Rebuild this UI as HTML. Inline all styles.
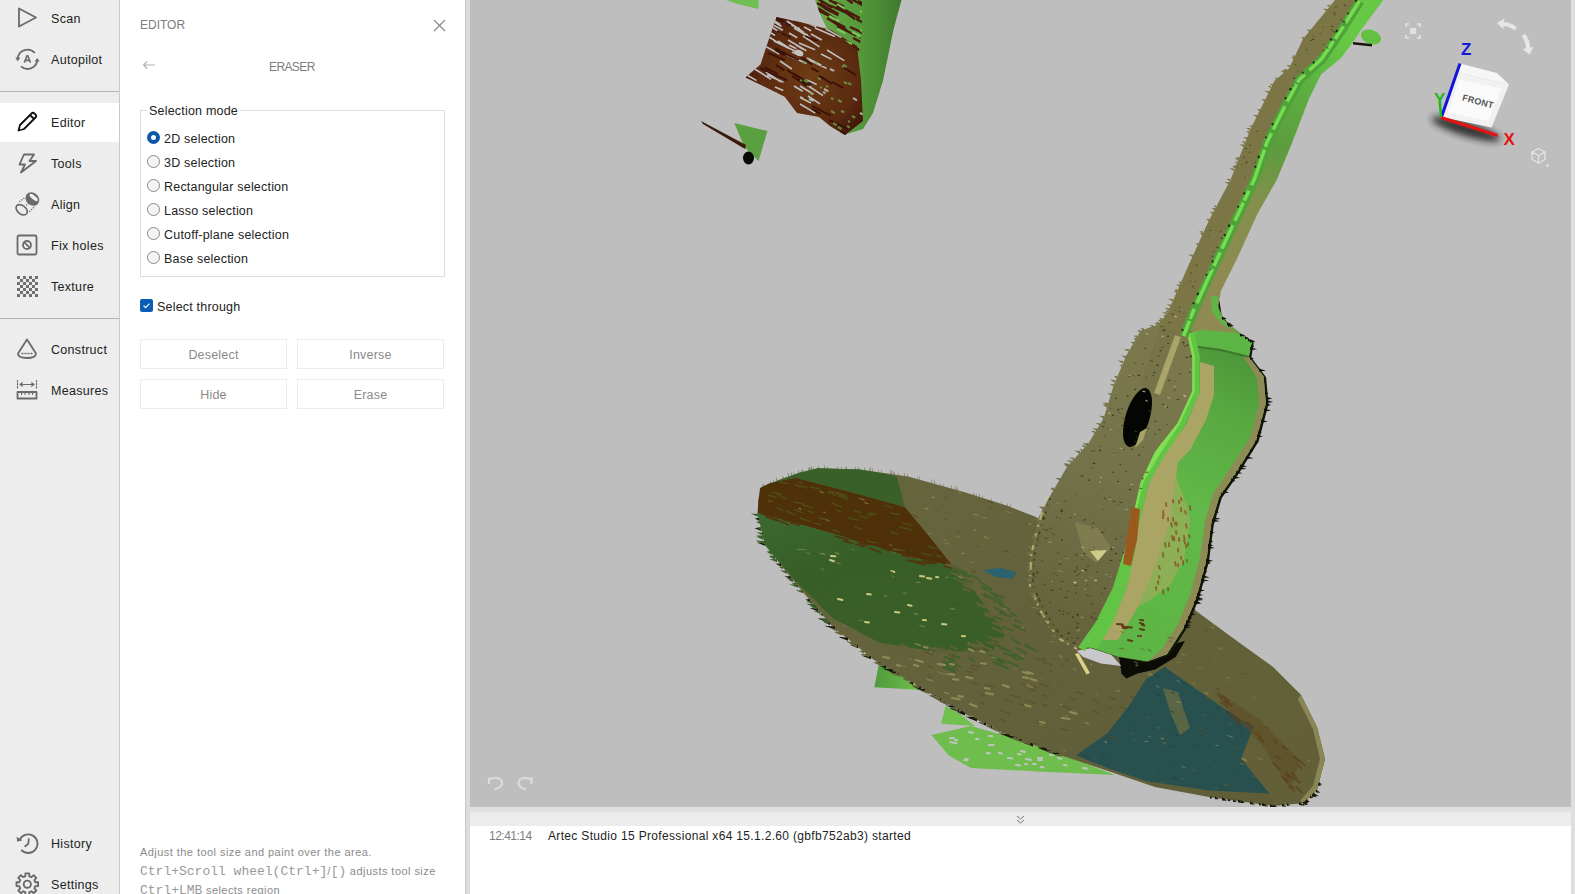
<!DOCTYPE html>
<html><head><meta charset="utf-8"><title>Artec Studio 15 Professional</title>
<style>
*{box-sizing:border-box;margin:0;padding:0}
html,body{width:1575px;height:894px;overflow:hidden;background:#fff;font-family:"Liberation Sans",sans-serif;}
#app{position:relative;width:1575px;height:894px;overflow:hidden;background:#fff}
#side{position:absolute;left:0;top:0;width:120px;height:894px;background:#ededed;border-right:1px solid #c9c9c9}
.nav{position:absolute;left:0;width:119px;height:40px}

.nav.sel{background:linear-gradient(#ededed 1px,#fff 1px)}
.nav span{position:absolute;left:51px;top:14px;font-size:12.5px;line-height:14px;color:#222;letter-spacing:.3px}
.nav svg{position:absolute;left:15px;top:8px;width:24px;height:24px;overflow:visible}
.sep{position:absolute;left:0;width:119px;height:1px;background:#b4b4b4}
#panel{position:absolute;left:120px;top:0;width:345px;height:894px;background:#fff}
#split{position:absolute;left:465px;top:0;width:5px;height:894px;background:#dcdcdc;border-left:1px solid #c8c8c8}
#view{position:absolute;left:470px;top:0;width:1101px;height:807px;background:#bebebe;overflow:hidden}
#rgt{position:absolute;left:1571px;top:0;width:4px;height:894px;background:#dedede}
#bar1{position:absolute;left:470px;top:807px;width:1101px;height:5px;background:#e0e0e0}
#bar2{position:absolute;left:470px;top:812px;width:1101px;height:14px;background:#ececec}
#log{position:absolute;left:470px;top:826px;width:1101px;height:68px;background:#fff;font-size:12px;color:#222}
.t{position:absolute;white-space:nowrap}
.g{color:#7d7d7d}
fieldset{position:absolute;left:20px;top:110px;width:305px;height:167px;border:1px solid #dedede}
.lg{position:absolute;left:27px;top:104px;background:#fff;padding:0 2px;font-size:12.5px;line-height:14px;color:#222;letter-spacing:.2px}
.rd{position:absolute;left:27px;width:13px;height:13px;border-radius:50%;border:1px solid #8a8a8a;background:#f4f4f4}
.rd.on{border:4px solid #0b57a8;background:#fff}
.rl{position:absolute;left:44px;font-size:12.5px;line-height:14px;color:#222;letter-spacing:.2px;white-space:nowrap}
.btn{position:absolute;width:147px;height:30px;border:1px solid #ececec;background:#fff;font-size:12.5px;line-height:30px;text-align:center;color:#8a8a8a;letter-spacing:.2px}
.help{position:absolute;left:20px;font-size:11px;line-height:12px;color:#8a8a8a;white-space:nowrap;letter-spacing:.45px}
.mono{font-family:"Liberation Mono",monospace;font-size:13px;letter-spacing:0;color:#999}
</style></head><body><div id="app">

<div id="side">
<div class="nav" style="top:-2px"><svg viewBox="0 0 24 24" fill="none" stroke="#6a6a6a" stroke-width="1.8" stroke-linejoin="round" stroke-linecap="round"><path d="M4 2.5L21 11.5L4 20.5Z"/></svg><span>Scan</span></div>
<div class="nav" style="top:39px"><svg viewBox="0 0 24 24" fill="none" stroke="#6a6a6a" stroke-width="1.8" stroke-linejoin="round" stroke-linecap="butt"><path d="M19.8 6A9.8 9.8 0 0 0 2.7 11.2M6 19.4A9.8 9.8 0 0 0 22.2 14"/><path d="M0.300 10.600H5.300L2.700 14.400ZM19.600 14.600H24.600L22.300 11Z" fill="#6a6a6a" stroke="none"/><path d="M9.300 15.600L12 8.800H12.800L15.500 15.600M10.300 13.400H14.500" stroke-width="1.600" stroke-linejoin="miter"/></svg><span>Autopilot</span></div>
<div class="nav sel" style="top:102px"><svg viewBox="0 0 24 24" fill="none" stroke="#111" stroke-width="1.8" stroke-linejoin="round" stroke-linecap="round"><path d="M3.5 20.5L5 15L16.5 3.5Q18 2 19.6 3.6L20.4 4.4Q22 6 20.5 7.5L9 19Z M15 5L19 9"/></svg><span>Editor</span></div>
<div class="nav" style="top:143px"><svg viewBox="0 0 24 24" fill="none" stroke="#6a6a6a" stroke-width="1.8" stroke-linejoin="round" stroke-linecap="round"><path d="M9 3.5H19L14.5 10H21L6 21.5L10 13.5H4.5Z"/></svg><span>Tools</span></div>
<div class="nav" style="top:184px"><svg viewBox="0 0 24 24" fill="none" stroke="#6a6a6a" stroke-width="1.700"><ellipse cx="6.700" cy="17.800" rx="6.400" ry="4.200" transform="rotate(39 6.700 17.800)"/><ellipse cx="17.400" cy="7" rx="6.500" ry="5.400" transform="rotate(39 17.400 7)" fill="#6a6a6a"/><ellipse cx="18.700" cy="5.500" rx="5" ry="2" transform="rotate(39 18.700 5.500)" fill="#efefef" stroke="none"/><path d="M4.300 9.700L10.300 5.300M14.300 19.800L20 14.100M11.100 13.300L15.100 10.100" stroke-width="1.300" stroke-dasharray="1.300 1.200"/></svg><span>Align</span></div>
<div class="nav" style="top:225px"><svg viewBox="0 0 24 24" fill="none" stroke="#6a6a6a" stroke-width="1.8" stroke-linejoin="round" stroke-linecap="round"><rect x="2.5" y="2.5" width="19" height="19" rx="1.5"/><circle cx="12" cy="12" r="4"/><path d="M9.3 9.3L14.7 14.7"/></svg><span>Fix holes</span></div>
<div class="nav" style="top:266px"><svg viewBox="0 0 24 24" fill="#707070" stroke="none"><rect x="2" y="2" width="3" height="3"/><rect x="2" y="8" width="3" height="3"/><rect x="2" y="14" width="3" height="3"/><rect x="2" y="20" width="3" height="3"/><rect x="5" y="5" width="3" height="3"/><rect x="5" y="11" width="3" height="3"/><rect x="5" y="17" width="3" height="3"/><rect x="8" y="2" width="3" height="3"/><rect x="8" y="8" width="3" height="3"/><rect x="8" y="14" width="3" height="3"/><rect x="8" y="20" width="3" height="3"/><rect x="11" y="5" width="3" height="3"/><rect x="11" y="11" width="3" height="3"/><rect x="11" y="17" width="3" height="3"/><rect x="14" y="2" width="3" height="3"/><rect x="14" y="8" width="3" height="3"/><rect x="14" y="14" width="3" height="3"/><rect x="14" y="20" width="3" height="3"/><rect x="17" y="5" width="3" height="3"/><rect x="17" y="11" width="3" height="3"/><rect x="17" y="17" width="3" height="3"/><rect x="20" y="2" width="3" height="3"/><rect x="20" y="8" width="3" height="3"/><rect x="20" y="14" width="3" height="3"/><rect x="20" y="20" width="3" height="3"/></svg><span>Texture</span></div>
<div class="nav" style="top:329px"><svg viewBox="0 0 24 24" fill="none" stroke="#6a6a6a" stroke-width="1.8" stroke-linejoin="round" stroke-linecap="round"><path d="M12 2.5L3 16.5Q3 21 12 21Q21 21 21 16.5Z"/><path d="M7 16.5H17" stroke-dasharray="1 2" stroke-width="1.3"/></svg><span>Construct</span></div>
<div class="nav" style="top:370px"><svg viewBox="0 0 24 24" fill="none" stroke="#6a6a6a" stroke-width="1.8" stroke-linejoin="round" stroke-linecap="round"><rect x="2.5" y="14" width="19" height="6.5"/><path d="M6.5 14V16.5M10 14V16.5M14 14V16.5M17.5 14V16.5" stroke-width="1.2"/><path d="M5 6.5H19M5 6.5L7.5 4.8M5 6.5L7.5 8.2M19 6.5L16.5 4.8M19 6.5L16.5 8.2" stroke-width="1.2"/><path d="M2.5 2.5V10.5M21.5 2.5V10.5" stroke-dasharray="1.5 1.5" stroke-width="1.2"/></svg><span>Measures</span></div>
<div class="nav" style="top:823px"><svg viewBox="0 0 24 24" fill="none" stroke="#6a6a6a" stroke-width="1.800" stroke-linecap="butt"><path d="M4.500 9.400A9.300 9.300 0 1 1 6.200 18.800"/><path d="M1.600 5.800L2.200 10.700L7.400 9.200Z" fill="#6a6a6a" stroke="none"/><path d="M13.800 7.400L13.300 12.800L9.600 15.800" stroke-linejoin="round"/></svg><span>History</span></div>
<div class="nav" style="top:864px"><svg viewBox="0 0 24 24" fill="none" stroke="#6a6a6a" stroke-width="1.900" stroke-linejoin="round"><path d="M10.4 1.4L14.2 1.4L14.3 4.3L16.5 5.1L18.7 3.2L21.3 5.8L19.4 8.0L20.2 10.2L23.1 10.3L23.1 14.1L20.2 14.2L19.4 16.4L21.3 18.6L18.7 21.2L16.5 19.3L14.3 20.1L14.2 23.0L10.4 23.0L10.3 20.1L8.1 19.3L5.9 21.2L3.3 18.6L5.2 16.4L4.4 14.2L1.5 14.1L1.5 10.3L4.4 10.2L5.2 8.0L3.3 5.8L5.9 3.2L8.1 5.1L10.3 4.3Z"/><circle cx="12.3" cy="12.2" r="3.600"/></svg><span>Settings</span></div>
<div class="sep" style="top:91px"></div><div class="sep" style="top:318px"></div>

</div>

<div id="panel">
<div class="t g" style="left:20px;top:18px;font-size:12px;line-height:14px;letter-spacing:0px">EDITOR</div>
<svg style="position:absolute;left:313px;top:19px" width="13" height="13" viewBox="0 0 13 13"><path d="M1 1L12 12M12 1L1 12" stroke="#8a8a8a" stroke-width="1.2" fill="none"/></svg>
<svg style="position:absolute;left:22px;top:60px" width="14" height="10" viewBox="0 0 14 10"><path d="M13 5H1.5M5 1.5L1.5 5L5 8.5" stroke="#b0b0b0" stroke-width="1.1" fill="none"/></svg>
<div class="t g" style="left:149px;top:60px;font-size:12px;line-height:14px;letter-spacing:-.6px">ERASER</div>
<fieldset></fieldset>
<div class="lg">Selection mode</div>
<div class="rd on" style="top:131px"></div><div class="rl" style="top:132px">2D selection</div>
<div class="rd" style="top:155px"></div><div class="rl" style="top:156px">3D selection</div>
<div class="rd" style="top:179px"></div><div class="rl" style="top:180px">Rectangular selection</div>
<div class="rd" style="top:203px"></div><div class="rl" style="top:204px">Lasso selection</div>
<div class="rd" style="top:227px"></div><div class="rl" style="top:228px">Cutoff-plane selection</div>
<div class="rd" style="top:251px"></div><div class="rl" style="top:252px">Base selection</div>
<svg style="position:absolute;left:20px;top:299px" width="13" height="13" viewBox="0 0 13 13"><rect width="13" height="13" rx="2" fill="#0b5cb5"/><path d="M3.6 6.6L5.6 8.6L9.4 4.6" stroke="#fff" stroke-width="1.1" fill="none"/></svg>
<div class="rl" style="left:37px;top:300px">Select through</div>
<div class="btn" style="left:20px;top:339px">Deselect</div>
<div class="btn" style="left:177px;top:339px">Inverse</div>
<div class="btn" style="left:20px;top:379px">Hide</div>
<div class="btn" style="left:177px;top:379px">Erase</div>
<div class="help" style="top:846px">Adjust the tool size and paint over the area.</div>
<div class="help" style="top:865px"><span class="mono">Ctrl+Scroll wheel(Ctrl+]</span>/<span class="mono">[)</span> adjusts tool size</div>
<div class="help" style="top:884px"><span class="mono">Ctrl+LMB</span> selects region</div>
</div>

<div id="split"></div>
<div id="view">
<!--S0--><svg id="scene" style="position:absolute;left:0;top:0" width="1101" height="807" viewBox="470 0 1101 807">
<defs>
<linearGradient id="gside" gradientUnits="userSpaceOnUse" x1="1120" y1="640" x2="1270" y2="340"><stop offset="0" stop-color="#5cb544"/><stop offset="0.45" stop-color="#62b848"/><stop offset="0.75" stop-color="#58a840"/><stop offset="1" stop-color="#478f36"/></linearGradient>
<linearGradient id="gdisc" x1="0" y1="0" x2="1" y2="1"><stop offset="0" stop-color="#67663f"/><stop offset="1" stop-color="#5e5d38"/></linearGradient>
<linearGradient id="gdg" x1="0" y1="0" x2="0.6" y2="1"><stop offset="0" stop-color="#3a6a30"/><stop offset="0.4" stop-color="#385e28"/><stop offset="1" stop-color="#3a5e27"/></linearGradient>
<linearGradient id="gfrag" x1="0" y1="0" x2="1" y2="0"><stop offset="0" stop-color="#4f9a3c"/><stop offset="1" stop-color="#72c04e"/></linearGradient>
<linearGradient id="gtl" x1="0" y1="0" x2="1" y2="0"><stop offset="0" stop-color="#6aa94a"/><stop offset="0.5" stop-color="#559a3b"/><stop offset="1" stop-color="#3f7a2d"/></linearGradient>
</defs>
<polygon points="815.0,0.0 901.5,0.0 893.4,30.0 883.0,80.5 873.0,113.0 863.0,129.0 847.0,134.0 855.0,110.0 857.0,50.0 845.0,40.0 828.0,31.0 820.0,14.0" fill="url(#gtl)" />
<clipPath id="cbr"><polygon points="776.6,17.1 800.0,22.0 831.0,30.0 857.0,46.0 861.0,80.5 863.0,121.0 845.0,135.0 830.0,126.0 819.0,117.0 797.0,113.0 784.7,96.7 745.4,77.5 760.5,64.4 768.5,40.3"/></clipPath>
<clipPath id="ctg"><polygon points="815.0,0.0 862.0,0.0 862.0,30.0 859.0,52.0 845.0,40.0 828.0,31.0 820.0,14.0"/></clipPath>
<radialGradient id="gbr" cx="0.55" cy="0.5" r="0.6"><stop offset="0" stop-color="#6e3c14"/><stop offset="0.7" stop-color="#5a2a10"/><stop offset="1" stop-color="#40140a"/></radialGradient>
<polygon points="776.6,17.1 800.0,22.0 831.0,30.0 857.0,46.0 861.0,80.5 863.0,121.0 845.0,135.0 830.0,126.0 819.0,117.0 797.0,113.0 784.7,96.7 745.4,77.5 760.5,64.4 768.5,40.3" fill="url(#gbr)" />
<path d="M784 22l15.8 6.7M800 31l7.8 4.1M763 35l8.3 3.5M792 52l8.8 4.1M807 58l14.4 7.2M833 17l18.1 8.6M771 20l10.5 6.5M774 41l15.2 7.6M801 18l8.0 3.7M811 34l10.8 6.0M794 28l16.5 9.7M778 41l12.9 8.2M815 28l19.9 8.6M791 49l9.0 4.7M763 45l16.4 9.0M826 29l15.5 8.6M803 36l16.5 10.9M796 45l7.6 4.5M809 60l17.6 8.4M789 45l7.4 3.8M773 20l7.5 4.6M770 26l11.4 7.2M766 35l13.2 8.5M821 54l10.6 5.4M787 55l19.6 8.6M773 25l10.0 5.3M804 27l7.2 3.7M788 40l18.4 10.8M799 43l16.1 6.7M827 50l17.2 10.6M789 33l8.2 4.7M765 18l10.0 4.4M786 17l7.3 3.2M768 31l7.0 4.5M806 22l10.3 5.1M787 21l16.5 11.1" stroke="#bebebe" stroke-width="1.6" fill="none" clip-path="url(#cbr)" opacity="1"/>
<path d="M775 87l8.3 3.6M767 75l16.4 7.3M747 112l13.1 5.8M780 61l11.9 8.0M801 98l10.0 5.0M756 102l12.3 7.5M766 72l14.7 9.9M800 104l15.3 9.1M760 88l11.3 4.7M747 75l9.6 5.6M807 85l16.0 10.7M807 80l9.7 4.5M758 71l13.0 8.4M800 86l13.5 8.3M751 96l16.1 9.9M794 86l8.7 5.3M767 104l17.6 8.8M771 112l15.2 6.8M753 68l16.0 9.9M755 105l17.1 9.8M768 90l8.9 3.6M808 96l12.0 7.8" stroke="#bebebe" stroke-width="1.6" fill="none" clip-path="url(#cbr)" opacity="1"/>
<path d="M797 120l17.8 8.1M775 50l9.9 5.5M776 65l8.3 5.3M787 70l13.6 8.8M795 125l13.2 7.1M808 17l12.9 5.8M745 111l9.2 4.8M832 82l11.1 5.9M812 109l8.3 4.6M775 48l16.6 8.9M812 106l18.5 9.5M819 76l13.1 7.7M799 79l12.3 8.1M829 120l19.2 9.0M812 128l18.1 7.9M760 68l8.2 3.8M754 95l16.0 10.3M764 101l15.8 6.9M851 131l9.2 6.1M793 73l18.5 11.6M764 67l13.7 6.7M768 53l16.8 6.9M811 68l7.4 3.6M820 76l7.4 5.0M840 132l8.6 4.0M750 108l10.8 4.7M796 124l17.6 8.3M763 125l13.8 8.1M756 22l15.7 8.0M754 128l14.4 8.9M755 118l7.5 4.8M799 56l13.2 8.6M777 31l14.0 6.5M758 34l7.9 3.6M782 52l16.8 8.0M805 36l11.9 4.9M775 17l16.0 8.7M768 72l19.4 8.3M843 67l12.7 7.9M792 76l14.7 9.8" stroke="#3a1008" stroke-width="1.8" fill="none" clip-path="url(#cbr)" opacity="1"/>
<path d="M822 122l3.6 2.0M826 86l2.0 0.9M805 116l2.5 1.1M805 123l4.0 2.3M818 78l2.6 1.3M810 93l2.3 1.5M863 101l2.3 1.5M820 87l1.8 0.9M831 98l2.3 1.2M800 80l2.0 1.0M803 62l2.6 1.2M838 100l3.7 2.1M847 126l2.8 1.4M864 71l3.6 2.1M803 123l4.1 2.3M848 121l2.1 1.1M833 123l3.7 2.3M838 127l3.5 2.0M815 62l2.2 1.1M807 123l3.2 1.8M841 111l3.2 1.3M852 116l3.1 1.7M843 65l3.8 1.8M805 80l3.8 1.7M848 133l3.1 1.6M831 111l3.7 2.1M842 66l2.2 1.0M848 83l3.4 1.4M804 80l3.5 2.0M844 82l3.1 1.6" stroke="#6aa04a" stroke-width="2.2" fill="none" clip-path="url(#cbr)" opacity="0.8"/>
<path d="M830 69l4.3 1.9M864 130l1.8 0.9M853 133l3.0 1.4M814 131l2.3 1.3M809 99l4.5 1.9M853 98l4.0 2.4M815 127l3.2 1.3M800 97l3.0 1.4M809 86l2.5 1.6M800 116l4.1 1.8M860 113l4.2 2.0M824 89l4.4 2.4M823 92l2.6 1.1M807 123l2.4 1.6" stroke="#bebebe" stroke-width="2" fill="none" clip-path="url(#cbr)" opacity="0.9"/>
<ellipse cx="799" cy="53" rx="4.500" ry="3" fill="#c4c4c4" transform="rotate(25 799 53)"/>
<path d="M824 8l14.5 7.2M831 43l18.4 12.3M844 41l19.8 11.7M848 -3l17.2 9.7M850 27l11.4 5.2M858 1l13.7 7.3M827 32l21.0 10.8M845 10l14.8 8.1M820 3l9.3 6.5M837 6l18.2 13.2M834 2l10.0 4.7M829 -0l10.5 5.4M840 39l17.5 9.7M833 21l12.4 6.6M815 9l21.2 10.1M837 26l19.5 9.8M826 7l12.5 7.1M860 37l20.0 9.0M814 30l19.4 11.1M841 -5l11.7 8.2M853 38l21.0 10.7M817 3l13.8 8.7M859 31l15.4 10.0M835 23l7.2 4.8M824 41l16.2 8.5M818 8l15.4 9.7M818 -1l14.1 8.4M831 6l16.1 7.2M827 18l19.9 12.3M856 19l10.5 5.3" stroke="#4a1a0c" stroke-width="2.4" fill="none" clip-path="url(#ctg)" opacity="1"/>
<path d="M860 30l7.7 3.5M837 29l8.3 4.3M845 41l7.1 3.2M829 16l10.3 5.1M852 32l9.0 4.5M860 11l11.2 5.7M823 33l6.8 4.8M837 4l6.8 3.8" stroke="#7cc95a" stroke-width="2" fill="none" clip-path="url(#ctg)" opacity="1"/>
<polygon points="726.0,0.0 758.5,0.0 758.5,9.0 738.0,4.0" fill="#6fbf52" />
<polygon points="734.3,122.9 767.5,131.0 758.5,161.0 744.4,147.0" fill="#5aa040" />
<polygon points="701.0,121.0 703.0,124.0 745.0,149.0 746.0,145.0" fill="#3a1a08" />
<ellipse cx="748.5" cy="158" rx="5.5" ry="6.5" fill="#0a0a05"/>
<polygon points="879.0,663.5 874.3,687.3 922.0,690.0 896.0,671.4" fill="url(#gfrag)" />
<polygon points="945.7,706.0 941.0,723.8 975.0,726.0 960.0,714.0" fill="#72c04e" />
<polygon points="931.4,735.0 971.0,726.0 1012.4,737.7 1063.0,755.0 1115.0,775.0 1037.8,771.4 971.0,768.0 948.9,755.6" fill="#6fbd4c" />
<polygon points="758.0,500.0 761.0,488.0 779.0,480.0 800.0,472.5 818.0,468.2 860.0,469.6 908.0,476.6 964.0,492.0 1008.0,506.0 1036.0,517.0 1196.0,611.0 1215.0,625.0 1241.0,644.0 1273.0,667.0 1301.0,695.0 1317.0,727.0 1325.0,759.0 1317.0,790.0 1304.0,803.0 1273.0,806.0 1209.0,797.0 1155.0,787.0 1108.0,771.0 1063.0,756.0 1012.0,737.0 965.0,714.0 924.0,690.0 874.0,660.0 832.0,626.0 796.0,584.0 765.0,545.0 758.0,514.0" fill="url(#gdisc)" />
<polygon points="768.0,485.0 779.0,480.0 800.0,472.5 818.0,468.2 860.0,469.6 896.6,476.0 905.0,507.3 850.0,492.0 796.0,478.0" fill="#3a6029" />
<polygon points="760.0,488.0 770.0,483.0 796.0,478.0 850.0,492.0 905.0,507.3 928.0,535.0 952.6,566.0 907.8,556.3 824.0,531.0 757.5,513.0" fill="#4e3009" />
<polygon points="757.5,513.0 824.0,531.0 907.8,556.3 952.6,566.0 977.8,595.5 1005.7,634.6 991.7,651.4 935.8,651.4 879.9,643.0 832.3,617.8 796.0,581.5 765.0,545.0" fill="url(#gdg)" />
<polygon points="983.0,570.0 1000.0,568.0 1017.0,572.0 1012.0,579.0 995.0,577.0" fill="#2b6470" />
<polygon points="1164.8,666.7 1177.5,676.0 1218.7,704.8 1253.6,727.0 1241.0,758.7 1269.5,793.6 1209.0,790.5 1145.7,781.0 1107.6,768.0 1075.9,755.6 1107.6,733.0 1129.8,704.8 1145.7,679.4" fill="#27504f" />
<polygon points="1196.0,611.0 1215.0,625.0 1241.0,644.0 1273.0,667.0 1301.0,695.0 1317.0,727.0 1325.0,759.0 1317.0,790.0 1304.0,803.0 1273.0,806.0 1269.5,793.6 1241.0,758.7 1253.6,727.0 1218.7,704.8 1177.5,676.0 1164.8,666.7 1185.0,641.0" fill="#66623a" opacity="0.55"/>
<polygon points="1215.0,690.0 1260.0,720.0 1300.0,760.0 1290.0,790.0 1262.0,745.0 1230.0,712.0" fill="#5e4a24" opacity="0.55"/>
<polygon points="1301.0,695.0 1317.0,727.0 1325.0,759.0 1317.0,790.0 1304.0,803.0 1300.0,801.0 1313.0,786.0 1320.0,759.0 1313.0,729.0 1298.0,699.0" fill="#8a8755" />
<polygon points="1119.0,657.0 1145.4,662.0 1167.0,655.0 1177.0,643.0 1185.0,641.0 1175.6,656.9 1155.3,669.6 1137.5,673.4 1126.3,678.5 1121.5,673.7" fill="#0c0c06" />
<polygon points="1076.8,650.8 1090.8,648.3 1111.0,654.6 1121.3,666.0 1101.0,663.5 1083.0,657.0" fill="#c8c8cc" />
<polygon points="1075.0,654.0 1078.5,653.0 1090.0,673.0 1086.5,674.5" fill="#d9d38a" />
<polygon points="1204.5,301.0 1219.4,301.0 1221.8,315.8 1234.1,330.5 1253.8,342.8 1251.3,357.6 1266.1,377.3 1268.5,404.3 1258.7,441.3 1239.0,473.2 1221.8,497.9 1213.8,524.8 1208.9,561.7 1199.0,598.6 1186.7,628.2 1169.5,655.2 1149.8,662.6 1120.3,657.7 1088.3,647.0 1080.9,647.9 1098.2,623.2 1115.4,588.8 1127.7,549.4 1134.5,521.0 1143.1,483.0 1157.5,452.5 1180.0,424.0 1194.7,392.0 1194.7,357.6 1189.8,335.4" fill="#15150a" />
<polygon points="1202.0,300.0 1216.9,300.0 1219.3,314.8 1231.6,329.5 1251.3,341.8 1248.8,356.6 1263.6,376.3 1266.0,403.3 1256.2,440.3 1236.5,472.2 1219.3,496.9 1211.3,523.8 1206.4,560.7 1196.5,597.6 1184.2,627.2 1167.0,654.2 1147.3,661.6 1117.8,656.7 1085.8,646.0 1078.4,646.9 1095.7,622.2 1112.9,587.8 1125.2,548.4 1132.0,520.0 1140.6,482.0 1155.0,451.5 1177.5,423.0 1192.2,391.0 1192.2,356.6 1187.3,334.4" fill="url(#gside)" />
<polygon points="1251.3,341.8 1248.8,356.6 1263.6,376.3 1266.0,403.3 1256.2,440.3 1236.5,472.2 1219.3,496.9 1211.3,523.8 1206.4,560.7 1196.5,597.6 1184.2,627.2 1167.0,654.2 1147.3,661.6 1162.0,649.0 1178.0,624.0 1190.0,595.0 1200.0,558.0 1205.0,522.0 1213.0,494.0 1230.0,469.0 1250.0,438.0 1259.0,403.0 1257.0,378.0 1244.0,358.0" fill="#8d8a55" />
<polygon points="1202.0,318.0 1219.3,314.8 1231.6,329.5 1252.4,342.5 1248.9,356.8 1220.0,349.7 1191.6,346.0 1187.3,334.4" fill="#5cb545" />
<polyline points="1191.600,346 1220,349.700 1248.900,356.800" fill="none" stroke="#2f5a22" stroke-width="2" opacity="0.600"/>
<polygon points="1200.0,362.0 1200.0,391.0 1186.0,425.0 1163.0,455.0 1149.0,484.0 1140.0,520.0 1133.0,550.0 1121.0,590.0 1104.0,626.0 1100.0,640.0 1118.0,640.0 1138.0,607.0 1153.0,573.0 1170.0,524.0 1176.0,478.0 1178.0,462.0 1190.0,450.0 1206.0,420.0 1214.0,395.0 1214.0,366.0" fill="#aaa465" />
<polygon points="1176.0,478.0 1185.0,500.0 1190.0,520.0 1184.0,560.0 1170.0,585.0 1150.0,600.0 1138.0,607.0 1153.0,573.0 1170.0,524.0" fill="#9cae5c" opacity="0.75"/>
<polyline points="1202.0,300.0 1187.3,334.4 1192.2,356.6 1192.2,391.0 1177.5,423.0 1157.8,452.6 1140.6,482.0 1132.0,520.0 1125.2,548.4 1112.9,587.8 1095.7,622.2 1078.4,646.9" fill="none" stroke="#62c444" stroke-width="15" stroke-linejoin="round"/>
<polyline points="1202.0,300.0 1187.3,334.4 1192.2,356.6 1192.2,391.0 1177.5,423.0 1157.8,452.6 1140.6,482.0 1132.0,520.0 1125.2,548.4 1112.9,587.8 1095.7,622.2 1078.4,646.9" fill="none" stroke="#7ee052" stroke-width="5"/>
<polygon points="1127.0,545.0 1136.0,548.0 1126.0,590.0 1112.0,624.0 1098.0,648.0 1078.4,646.9 1095.7,622.2 1112.9,587.8" fill="#62c444" />
<linearGradient id="gfront" gradientUnits="userSpaceOnUse" x1="1170" y1="330" x2="1060" y2="630"><stop offset="0" stop-color="#7c7a4c"/><stop offset="0.5" stop-color="#74724a"/><stop offset="1" stop-color="#64633b"/></linearGradient>
<polygon points="1170.0,310.0 1158.0,324.6 1140.6,330.8 1125.8,356.6 1113.5,386.0 1103.7,418.0 1088.9,442.7 1066.8,467.3 1049.5,496.9 1039.0,516.4 1029.2,555.8 1031.7,587.8 1041.5,617.3 1058.7,639.5 1078.4,646.9 1095.7,622.2 1112.9,587.8 1125.2,548.4 1132.0,520.0 1140.6,482.0 1155.0,451.5 1177.5,423.0 1192.2,391.0 1192.2,356.6 1187.3,334.4 1202.0,300.0" fill="url(#gfront)" />
<polygon points="1132.0,507.0 1140.0,509.0 1137.0,540.0 1131.0,566.0 1123.0,564.0 1127.0,535.0" fill="#9a5a1e" />
<polygon points="1075.0,522.0 1098.0,528.0 1111.0,548.0 1096.0,563.0 1083.0,552.0" fill="#8a8758" opacity="0.6"/>
<polygon points="1090.0,551.0 1107.0,550.0 1098.0,561.0" fill="#d0cc86" />
<polygon points="1160.0,325.0 1181.0,335.0 1158.0,398.0 1140.0,388.0" fill="#77744a" />
<polygon points="1175.0,335.0 1181.0,337.0 1160.0,395.0 1154.0,393.0" fill="#b5b070" opacity="0.8"/>
<polyline points="1047,496 1037,530 1031,556 1030,586 1040,610 1058,638 1077,649" fill="none" stroke="#d0ca84" stroke-width="2.200" stroke-dasharray="5 4 2 6 8 5 2 7 3 9" opacity="0.700"/>
<polyline points="1050,498 1040,531 1034,557 1033,585 1043,608 1060,635 1078,645" fill="none" stroke="#2e2d14" stroke-width="1.600" stroke-dasharray="2 5 1 6 3 4" opacity="0.700"/>
<ellipse cx="1137.5" cy="417.5" rx="12" ry="30.5" transform="rotate(17 1137.5 417.5)" fill="#050503"/>
<polygon points="1140.0,432.0 1147.0,428.0 1143.0,440.0 1135.0,448.0" fill="#a8a468" />
<polygon points="1335.0,0.0 1303.0,39.0 1289.0,68.5 1274.7,80.6 1250.5,129.0 1230.4,180.0 1208.9,220.4 1188.8,264.7 1166.6,315.0 1160.6,325.0 1181.0,335.0 1181.0,335.0 1190.0,312.0 1210.0,268.0 1230.0,225.0 1252.0,178.0 1264.6,141.0 1284.7,100.7 1296.8,78.5 1319.0,58.0 1338.0,30.0 1357.0,0.0" fill="#7c7646" />
<linearGradient id="gneck" gradientUnits="userSpaceOnUse" x1="1340" y1="40" x2="1225" y2="290"><stop offset="0" stop-color="#66c844"/><stop offset="0.2" stop-color="#5db040"/><stop offset="0.45" stop-color="#5c9c3e"/><stop offset="0.65" stop-color="#82904c"/><stop offset="1" stop-color="#8f8a52"/></linearGradient>
<polygon points="1357.0,0.0 1338.0,30.0 1319.0,58.0 1296.8,78.5 1284.7,100.7 1264.6,141.0 1252.0,178.0 1230.0,225.0 1210.0,268.0 1190.0,312.0 1181.0,335.0 1202.0,330.0 1240.0,333.0 1225.0,321.0 1218.0,307.0 1221.0,290.8 1237.1,258.6 1257.2,214.3 1276.7,180.0 1292.8,141.0 1309.0,98.7 1321.0,74.5 1341.0,58.0 1353.0,42.0 1361.0,30.0 1383.4,0.0" fill="url(#gneck)" />
<polygon points="1218.0,307.0 1225.0,321.0 1240.0,333.0 1251.0,341.0 1231.0,329.0 1219.0,314.0" fill="#5fa541" />
<polyline points="1357.0,0.0 1338.0,30.0 1319.0,58.0 1296.8,78.5 1284.7,100.7 1264.6,141.0 1252.0,178.0 1230.0,225.0 1210.0,268.0 1190.0,312.0 1181.0,335.0" fill="none" stroke="#4fa23a" stroke-width="9" transform="translate(3,1.2)"/>
<polyline points="1357.0,0.0 1338.0,30.0 1319.0,58.0 1296.8,78.5 1284.7,100.7 1264.6,141.0 1252.0,178.0 1230.0,225.0 1210.0,268.0 1190.0,312.0 1181.0,335.0" fill="none" stroke="#78dc52" stroke-width="3.5" stroke-dasharray="26 4 15 3 38 6 11 2 20 5" transform="translate(2.5,1)"/>
<polyline points="1357.0,0.0 1338.0,30.0 1319.0,58.0 1296.8,78.5 1284.7,100.7 1264.6,141.0 1252.0,178.0 1230.0,225.0 1210.0,268.0 1190.0,312.0 1181.0,335.0" fill="none" stroke="#1c2a10" stroke-width="2" stroke-dasharray="2 13 1.5 19 2.5 8 2 27" transform="translate(-0.5,0)"/>
<polygon points="1211.0,296.0 1217.5,296.0 1219.3,314.8 1231.6,329.5 1222.0,324.0 1212.0,312.0" fill="#5cb545" />
<ellipse cx="1371" cy="37" rx="10.5" ry="7" transform="rotate(20 1371 37)" fill="#63c043"/>
<polygon points="1353.0,42.0 1372.0,44.0 1372.0,46.5 1353.0,44.5" fill="#15150a" />
<path d="M968 655l6.9 3.0M999 648l11.2 7.3M904 654l12.8 4.1M989 603l5.9 2.7M929 652l7.3 3.1M979 650l8.7 3.4M1001 623l14.7 4.6M989 637l11.2 4.6M979 645l12.0 4.1M900 648l10.9 4.5M991 651l5.9 2.4M966 580l5.7 2.3M970 579l8.6 3.2M985 615l6.3 2.1M921 655l8.2 4.0M934 648l10.0 3.6M965 651l6.1 3.1M949 653l6.4 3.0M999 622l13.4 4.8M976 650l5.8 2.8M947 564l11.7 3.9M948 565l10.2 4.3M977 641l6.7 4.3M945 656l14.3 5.1M984 653l6.1 2.6M946 652l7.5 2.9M970 650l6.7 3.8M995 616l10.1 6.1M948 650l6.9 2.6M958 580l11.1 5.1M995 638l9.3 3.6M1004 633l7.2 4.4M886 649l12.2 6.6M881 644l12.2 5.6M978 605l7.8 2.6M972 645l12.2 4.8M984 612l7.7 4.0M978 654l12.5 5.1M912 651l10.9 5.8M972 646l9.1 5.0M890 651l7.1 2.2M988 649l5.7 3.4M992 641l10.7 6.2M963 589l6.6 2.2M992 622l5.8 2.5M914 654l8.3 3.1M930 648l7.6 3.4M901 644l11.1 6.1M973 644l7.1 2.5M1009 633l5.9 3.8M977 603l7.1 3.6M975 648l12.1 6.5M993 628l11.3 5.1M963 585l9.3 4.2M969 653l6.9 3.6M983 599l9.2 5.9M989 612l8.6 5.4M988 642l9.9 4.0M952 573l13.2 5.5M1003 645l5.7 3.3M1000 638l6.4 3.7M967 585l6.6 2.3M999 639l6.6 4.0M968 649l12.0 7.0M938 648l10.8 4.2M945 566l10.1 3.5M951 646l5.2 3.1M968 644l8.9 3.9M970 653l7.8 5.0M925 646l8.8 4.0" stroke="#62613b" stroke-width="2" fill="none" opacity="0.9" stroke-linecap="round"/>
<path d="M985 594l8.1 5.1M999 647l7.4 3.0M999 646l11.8 5.9M1003 627l10.4 3.9M1000 613l11.2 3.8M956 570l10.2 6.3M999 604l10.8 6.1M991 592l7.1 3.1M998 661l4.9 2.4M1013 625l12.1 5.4M993 662l12.6 5.8M954 568l4.5 2.4M951 665l5.0 3.0M1004 653l11.0 3.6M981 661l6.2 3.9M997 609l7.4 4.2M1025 646l9.4 3.7M945 665l9.8 5.7M994 597l7.6 4.6M994 657l11.4 4.5M1013 657l4.6 2.7M1013 654l9.4 3.7M1017 648l9.5 5.9M971 575l8.7 5.0M982 587l6.4 3.5M1011 613l5.0 2.9M992 657l11.7 5.6M994 601l9.2 2.9M943 667l11.6 5.4M991 593l11.0 4.9M1025 644l10.4 6.6M990 655l7.7 4.9M994 607l5.1 3.3M998 664l10.1 4.4M980 582l11.5 7.4M960 570l6.7 2.8M1011 638l9.1 5.9M1008 662l10.3 4.1M963 579l8.8 3.1M943 661l5.9 3.7M1018 657l5.7 2.6M949 661l11.2 5.7M960 572l10.3 5.0M953 655l6.8 3.0M969 658l5.1 3.3M945 657l10.3 3.8M983 595l6.9 2.5M1015 620l6.1 2.7M995 617l7.0 2.6M1013 625l6.5 2.1" stroke="#3a6029" stroke-width="2" fill="none" opacity="0.8" stroke-linecap="round"/>
<path d="M922 562l9.8 1.6M846 541l6.5 2.4M917 562l8.0 3.0M859 542l10.2 1.7M766 517l11.3 2.4M769 518l9.5 2.9M835 536l12.1 3.8M916 561l6.1 1.9M944 566l7.7 2.2M843 541l6.0 1.2M784 519l8.0 2.2M902 555l11.6 3.5M847 538l11.4 2.8M911 561l9.6 2.8M922 560l13.4 2.9M762 514l10.1 3.1M859 542l11.1 3.0M858 541l7.3 1.5M881 547l8.0 3.7M856 544l7.7 2.7M783 520l11.9 2.2M779 521l9.4 3.8M859 543l7.6 3.0M929 562l6.9 1.6M901 553l6.2 1.1M791 523l8.1 2.2M896 551l7.7 1.8M907 560l6.7 1.6M869 548l11.8 4.4M855 540l7.1 1.7" stroke="#52320a" stroke-width="1.6" fill="none" opacity="0.9" stroke-linecap="round"/>
<path d="M780 482l7.9 1.7M922 553l10.1 2.9M860 516l7.1 2.0M819 518l8.7 2.2M800 486l7.0 2.0M891 532l6.7 2.2M885 505l6.8 2.9M768 495l9.4 2.7M833 530l7.5 2.4M870 513l5.7 1.2M811 487l8.5 2.0M855 527l6.3 2.1M867 541l10.1 1.9M837 494l11.1 3.6M808 511l4.8 1.6M803 505l9.6 2.7M936 555l5.8 2.2M786 511l9.3 4.2M800 518l10.3 3.4M835 492l10.6 3.4M893 549l11.5 1.9M828 492l7.8 3.3M891 513l8.2 1.7M777 508l6.0 2.6M795 510l7.9 2.6M836 510l4.8 1.6M772 492l9.4 2.2M815 523l6.5 2.1M928 546l8.9 3.1M832 503l9.7 4.1M903 523l9.1 2.4M867 514l5.3 1.3M854 511l6.5 1.5M829 491l4.7 2.0M849 518l8.7 2.1M795 485l6.9 1.7M900 527l11.2 2.9M778 495l8.2 3.8M794 502l9.7 2.1M839 496l8.5 3.6" stroke="#4f6a24" stroke-width="1.4" fill="none" opacity="0.5" stroke-linecap="round"/>
<path d="M962 636l3.0 0.2M838 599l4.5 1.0M865 622l3.9 0.6M936 577l2.1 0.3M867 594l3.8 0.4M923 620l3.0 0.2M831 556l4.3 0.3M908 605l3.6 0.8M920 576l4.2 0.5M942 624l4.3 0.5M891 571l3.4 1.0M895 612l4.3 0.6M830 560l4.0 1.2M927 578l4.3 0.7" stroke="#d8d48c" stroke-width="2" fill="none" opacity="0.9" stroke-linecap="round"/>
<path d="M914 665l4.2 1.0M916 660l6.5 2.0M1040 722l4.3 0.9M1003 685l5.5 2.1M883 657l6.3 0.9M981 663l5.1 0.8M980 651l4.6 1.2M1072 713l4.3 0.7M924 647l3.1 0.8M958 696l4.8 0.6M1025 705l5.5 1.6M1070 712l4.9 1.0M953 679l5.0 0.8M950 664l3.9 0.6M1062 718l7.5 1.0M1027 672l6.0 1.7M1031 679l5.4 1.6M1023 672l5.9 1.7M985 688l4.1 0.7M986 693l6.9 1.3M970 704l6.6 2.6M897 665l3.4 0.8M969 649l4.6 1.9M1027 685l5.1 1.8M1023 677l5.5 1.1M949 674l4.9 0.6M938 664l7.1 1.1M908 682l6.7 2.0M966 677l6.4 1.3M952 698l7.5 1.3" stroke="#a09b62" stroke-width="2.2" fill="none" opacity="0.7" stroke-linecap="round"/>
<path d="M979 648l8.2 2.4M1026 700l8.7 3.5M1011 695l8.7 2.6M1006 699l6.5 2.8M1061 729l6.3 1.2M1063 706l8.0 3.3M928 666l4.1 1.7M924 651l8.1 2.8M1071 698l4.0 1.6M1000 710l9.2 3.9M980 702l3.6 1.8M966 671l5.7 1.4M1106 707l6.8 2.0M1108 736l8.9 2.2M1029 685l6.5 2.1M1040 684l8.6 2.0M1121 707l4.2 1.1M1028 689l7.1 1.9M1093 711l6.1 2.8M1043 662l9.0 3.1M1092 700l7.5 2.9M971 665l8.8 1.9M924 651l7.9 3.7M1000 719l5.0 2.3M1065 659l4.0 1.6M970 668l7.2 2.0M1035 658l9.1 2.5M994 644l5.9 2.2M1075 692l7.9 1.7M970 682l8.1 2.6M1043 705l4.4 1.0M980 694l5.1 2.0M972 648l7.2 1.5M1043 695l4.0 1.3M985 685l7.8 1.7M1110 698l4.8 1.0M1019 704l4.5 1.4M1022 684l5.0 1.5M949 655l5.0 2.2M1037 723l5.0 2.0" stroke="#5a4a22" stroke-width="1.8" fill="none" opacity="0.5" stroke-linecap="round"/>
<path d="M1171 523l1.1 3.6M1173 518l0.3 3.0M1179 501l0.3 2.1M1175 562l0.8 3.5M1184 540l1.2 3.6M1189 535l0.7 2.4M1159 566l0.9 3.1M1163 590l0.4 4.0M1169 543l0.2 3.4M1181 557l0.3 2.0M1163 511l0.5 3.9M1181 508l0.2 3.6M1174 537l0.3 3.5M1186 524l0.6 3.8M1190 506l0.4 3.9M1159 576l0.5 2.0M1168 518l0.2 2.7M1178 564l0.2 2.5M1183 561l0.3 3.8M1166 503l0.3 3.1M1163 553l0.3 3.6M1184 536l0.6 3.0M1163 516l0.2 2.4M1175 523l0.4 1.7M1179 538l0.3 3.1M1158 581l0.2 3.0M1165 543l0.7 3.8M1185 511l0.9 2.7M1156 587l0.2 2.6M1186 545l0.1 2.4M1187 560l0.2 1.7M1168 588l0.3 2.4M1176 531l0.4 2.8M1188 543l0.1 2.4M1178 549l0.3 2.6M1181 498l0.6 2.2M1173 500l0.3 2.5M1176 522l0.8 3.3M1172 536l0.5 3.9M1183 561l0.1 2.4" stroke="#8a4e20" stroke-width="1.8" fill="none" opacity="0.8" stroke-linecap="round"/>
<path d="M1138 636l3.1 0.2M1142 625l2.5 0.5M1140 620l3.2 0.2M1122 626l5.6 1.8M1117 624l5.8 0.5M1123 628l2.4 0.3M1126 627l5.8 0.6M1128 640l4.4 1.1M1140 629l4.1 0.9M1140 623l3.3 1.0" stroke="#5a3010" stroke-width="2" fill="none" opacity="0.9" stroke-linecap="round"/>
<polygon points="1163.0,688.0 1178.0,692.0 1190.0,728.0 1180.0,735.0 1170.0,712.0" fill="#6f6d40" opacity="0.7"/>
<path d="M976 739l2.2 0.2M1058 758l3.2 0.6M950 742l3.8 0.8M1038 758l4.3 0.2M989 745l4.4 0.2M1021 751l3.9 0.8M954 743l2.2 0.1M1016 765l4.0 0.4M999 753l2.8 0.5M1064 765l2.4 0.3M1083 768l4.2 0.7M1041 767l2.4 0.3M1050 755l2.8 -0.1M1033 764l2.8 0.0M969 732l3.9 0.9M955 740l2.2 0.2M1025 764l2.1 0.4M950 738l3.9 0.2M987 753l2.6 0.4M1038 760l3.7 0.2M1018 754l2.6 0.5M1008 758l4.1 0.3M989 736l3.2 0.1M964 760l3.5 0.2M965 759l2.6 0.1M1026 759l4.9 0.8" stroke="#c4c4c4" stroke-width="2.2" fill="none" opacity="0.9" stroke-linecap="round"/>
<path d="M1296 787l6.0 5.7M1276 756l4.4 3.4M1224 701l3.5 3.4M1292 773l4.8 4.9M1226 701l5.6 4.8M1233 716l2.8 3.0M1284 778l4.1 2.6M1286 773l5.7 3.7M1232 716l7.4 5.8M1226 711l5.1 4.5M1255 732l5.8 5.5M1274 740l3.3 3.5M1282 777l5.6 5.4M1218 695l3.7 4.0M1294 757l7.7 5.6M1298 765l3.6 3.6M1291 786l2.8 2.9M1222 696l5.8 4.3M1286 775l5.6 3.8M1246 722l7.1 4.8M1221 702l6.1 5.4M1259 738l4.8 4.3M1293 778l7.0 4.5M1236 722l4.9 3.7M1298 759l6.9 6.7M1290 787l4.3 4.2M1283 746l3.3 3.3M1273 763l6.1 5.9M1236 717l3.0 2.8M1233 717l7.2 6.6" stroke="#5a3a18" stroke-width="1.8" fill="none" opacity="0.6" stroke-linecap="round"/>
<path d="M1076 567q1.4 -1.0 1.9 0.4q-1.4 1.0 -1.9 -0.4zM1150 360q2.3 -0.4 3.6 1.7q-2.3 0.4 -3.6 -1.7zM1096 572q1.4 -1.1 1.6 0.7q-1.4 1.1 -1.6 -0.7zM1058 564q2.3 -0.6 3.8 0.7q-2.3 0.6 -3.8 -0.7zM1092 523q1.9 -1.3 2.7 0.3q-1.9 1.3 -2.7 -0.3zM1093 613q1.5 -1.2 1.9 0.2q-1.5 1.2 -1.9 -0.2zM1176 399q2.4 -0.7 3.8 0.9q-2.4 0.7 -3.8 -0.9zM1137 375q2.4 -1.2 3.5 0.8q-2.4 1.2 -3.5 -0.8zM1076 638q2.1 -0.7 3.3 0.9q-2.1 0.7 -3.3 -0.9zM1119 502q2.3 -0.9 3.7 0.6q-2.3 0.9 -3.7 -0.6zM1076 627q1.9 -1.3 2.4 0.7q-1.9 1.3 -2.4 -0.7zM1041 561q1.5 -1.1 1.9 0.5q-1.5 1.1 -1.9 -0.5zM1142 478q1.4 -1.1 1.7 0.5q-1.4 1.1 -1.7 -0.5zM1061 540q1.7 -1.5 2.1 0.6q-1.7 1.5 -2.1 -0.6zM1074 585q2.0 -0.7 3.1 1.1q-2.0 0.7 -3.1 -1.1zM1141 363q2.1 0.0 3.4 1.8q-2.1 -0.0 -3.4 -1.8zM1162 404q1.7 -1.3 2.0 0.7q-1.7 1.3 -2.0 -0.7zM1122 552q1.7 -1.2 2.0 0.9q-1.7 1.2 -2.0 -0.9zM1045 530q2.1 -1.6 2.9 0.3q-2.1 1.6 -2.9 -0.3zM1059 518q1.4 -0.7 2.1 0.4q-1.4 0.7 -2.1 -0.4zM1162 330q2.6 -1.6 3.8 0.4q-2.6 1.6 -3.8 -0.4zM1162 347q1.5 -1.4 1.7 0.4q-1.5 1.4 -1.7 -0.4zM1154 434q1.4 -0.7 1.9 0.7q-1.4 0.7 -1.9 -0.7zM1110 548q2.2 -1.1 3.1 1.3q-2.2 1.1 -3.1 -1.3zM1136 437q1.7 -1.4 2.2 0.2q-1.7 1.4 -2.2 -0.2zM1034 576q1.5 -0.9 1.9 0.7q-1.5 0.9 -1.9 -0.7zM1109 497q1.1 -0.7 1.5 0.4q-1.1 0.7 -1.5 -0.4zM1157 355q1.8 -0.3 2.8 1.4q-1.8 0.3 -2.8 -1.4zM1134 431q2.4 -1.4 3.5 0.6q-2.4 1.4 -3.5 -0.6zM1152 375q1.6 -0.5 2.5 0.8q-1.6 0.5 -2.5 -0.8zM1060 509q2.3 -0.6 3.3 1.8q-2.3 0.6 -3.3 -1.8zM1087 566q1.7 -1.5 2.1 0.4q-1.7 1.5 -2.1 -0.4zM1128 376q2.1 -0.7 3.3 1.1q-2.1 0.7 -3.3 -1.1zM1112 472q1.7 -1.0 2.3 0.6q-1.7 1.0 -2.3 -0.6zM1075 554q2.0 -0.6 2.9 1.5q-2.0 0.6 -2.9 -1.5zM1060 511q2.3 -1.4 3.1 0.8q-2.3 1.4 -3.1 -0.8zM1104 436q1.4 -0.5 2.0 0.6q-1.4 0.5 -2.0 -0.6zM1112 501q2.4 -0.7 3.8 0.9q-2.4 0.7 -3.8 -0.9zM1128 489q2.5 -1.1 3.7 1.1q-2.5 1.1 -3.7 -1.1zM1080 476q2.2 -1.4 3.2 0.4q-2.2 1.4 -3.2 -0.4zM1159 350q2.2 -1.1 3.0 1.1q-2.2 1.1 -3.0 -1.1zM1174 390q1.5 -1.3 1.8 0.5q-1.5 1.3 -1.8 -0.5zM1131 446q1.5 -1.1 2.0 0.4q-1.5 1.1 -2.0 -0.4zM1060 589q1.5 -1.5 1.7 0.4q-1.5 1.5 -1.7 -0.4zM1101 489q1.1 -0.8 1.5 0.3q-1.1 0.8 -1.5 -0.3zM1131 449q1.9 -1.2 2.6 0.5q-1.9 1.2 -2.6 -0.5zM1134 363q1.4 -1.2 1.5 0.7q-1.4 1.2 -1.5 -0.7zM1101 593q1.4 -1.2 1.7 0.2q-1.4 1.2 -1.7 -0.2zM1123 449q1.4 -0.7 2.0 0.7q-1.4 0.7 -2.0 -0.7zM1049 580q1.2 -0.8 1.7 0.2q-1.2 0.8 -1.7 -0.2zM1168 380q1.7 -1.1 2.2 0.9q-1.7 1.1 -2.2 -0.9zM1063 611q1.4 -1.3 1.4 0.7q-1.4 1.3 -1.4 -0.7zM1064 597q2.4 -1.0 3.6 1.1q-2.4 1.0 -3.6 -1.1zM1101 426q2.3 -0.8 3.7 0.9q-2.3 0.8 -3.7 -0.9zM1142 447q1.5 -0.5 2.3 0.6q-1.5 0.5 -2.3 -0.6zM1076 569q1.8 -1.0 2.7 0.3q-1.8 1.0 -2.7 -0.3zM1121 425q1.5 -0.8 2.0 0.9q-1.5 0.8 -2.0 -0.9zM1117 409q1.9 -1.0 2.7 1.1q-1.9 1.0 -2.7 -1.1zM1083 520q1.8 -0.5 2.9 0.7q-1.8 0.5 -2.9 -0.7zM1042 517q1.4 -1.1 1.7 0.7q-1.4 1.1 -1.7 -0.7z" fill="#3b3a1c" opacity="0.8"/>
<path d="M1062 614q1.3 -0.8 1.8 0.7q-1.3 0.8 -1.8 -0.7zM1092 463q2.4 -1.1 3.8 0.5q-2.4 1.1 -3.8 -0.5zM1078 574q1.2 -0.9 1.5 0.8q-1.2 0.9 -1.5 -0.8zM1134 389q1.7 -0.8 2.5 0.8q-1.7 0.8 -2.5 -0.8zM1147 428q1.7 -0.6 2.8 0.5q-1.7 0.6 -2.8 -0.5zM1099 446q1.3 -0.9 1.6 0.5q-1.3 0.9 -1.6 -0.5zM1166 407q1.7 -1.3 2.2 0.5q-1.7 1.3 -2.2 -0.5zM1117 481q1.6 -0.8 2.3 0.7q-1.6 0.8 -2.3 -0.7zM1186 345q1.9 -1.3 2.6 0.3q-1.9 1.3 -2.6 -0.3zM1088 480q1.6 -1.6 1.8 0.3q-1.6 1.6 -1.8 -0.3zM1083 553q2.3 -0.9 3.6 0.6q-2.3 0.9 -3.6 -0.6zM1084 569q2.2 -0.6 3.3 1.6q-2.2 0.6 -3.3 -1.6zM1109 560q2.2 -0.6 3.5 0.8q-2.2 0.6 -3.5 -0.8zM1090 617q2.0 -1.1 3.0 0.4q-2.0 1.1 -3.0 -0.4zM1166 424q1.3 -0.5 1.9 0.7q-1.3 0.5 -1.9 -0.7zM1156 365q2.1 -1.5 2.9 0.3q-2.1 1.5 -2.9 -0.3zM1189 372q1.3 -1.2 1.4 0.7q-1.3 1.2 -1.4 -0.7zM1185 357q2.2 -1.0 3.4 0.7q-2.2 1.0 -3.4 -0.7zM1091 451q1.5 -0.7 2.2 0.4q-1.5 0.7 -2.2 -0.4zM1119 464q1.7 -0.6 2.7 0.5q-1.7 0.6 -2.7 -0.5zM1036 572q2.0 -1.3 2.5 0.9q-2.0 1.3 -2.5 -0.9zM1099 450q1.7 -1.2 2.1 0.8q-1.7 1.2 -2.1 -0.8zM1112 415q1.8 -1.3 2.3 0.8q-1.8 1.3 -2.3 -0.8zM1032 578q1.2 -0.8 1.6 0.5q-1.2 0.8 -1.6 -0.5zM1087 585q1.3 -0.6 1.8 0.5q-1.3 0.6 -1.8 -0.5zM1115 553q1.8 -1.0 2.3 1.1q-1.8 1.0 -2.3 -1.1zM1058 610q2.0 -0.2 3.2 1.3q-2.0 0.2 -3.2 -1.3zM1115 539q1.6 -1.5 1.9 0.2q-1.6 1.5 -1.9 -0.2zM1101 532q1.8 -0.6 2.7 1.0q-1.8 0.6 -2.7 -1.0zM1076 614q2.3 -1.1 3.2 1.4q-2.3 1.1 -3.2 -1.4zM1049 602q1.5 -0.3 2.4 1.1q-1.5 0.3 -2.4 -1.1zM1107 428q1.1 -0.7 1.6 0.3q-1.1 0.7 -1.6 -0.3zM1074 571q1.6 -1.3 1.8 0.9q-1.6 1.3 -1.8 -0.9zM1072 617q1.7 -1.6 2.0 0.4q-1.7 1.6 -2.0 -0.4zM1189 356q2.2 -1.3 3.1 0.7q-2.2 1.3 -3.1 -0.7zM1115 398q1.5 -0.7 2.2 0.7q-1.5 0.7 -2.2 -0.7zM1139 488q2.2 -0.7 3.6 0.6q-2.2 0.7 -3.6 -0.6zM1050 590q1.9 -0.6 3.1 0.7q-1.9 0.6 -3.1 -0.7zM1103 588q2.3 -0.9 3.7 0.6q-2.3 0.9 -3.7 -0.6zM1167 343q1.6 -1.0 2.2 0.7q-1.6 1.0 -2.2 -0.7zM1056 517q1.2 -0.8 1.6 0.2q-1.2 0.8 -1.6 -0.2zM1121 408q1.4 -0.9 2.0 0.5q-1.4 0.9 -2.0 -0.5zM1153 372q1.8 -0.6 2.8 1.0q-1.8 0.6 -2.8 -1.0zM1182 342q1.9 -0.9 2.7 1.0q-1.9 0.9 -2.7 -1.0zM1167 336q1.8 -1.5 2.1 0.6q-1.8 1.5 -2.1 -0.6zM1093 547q1.3 -0.9 1.7 0.5q-1.3 0.9 -1.7 -0.5zM1126 395q2.0 -0.4 3.0 1.6q-2.0 0.4 -3.0 -1.6zM1067 633q2.1 -1.2 3.2 0.4q-2.1 1.2 -3.2 -0.4zM1061 581q1.7 -0.5 2.6 0.9q-1.7 0.5 -2.6 -0.9zM1043 517q1.9 -0.8 2.6 1.4q-1.9 0.8 -2.6 -1.4zM1075 593q1.5 -1.3 1.9 0.2q-1.5 1.3 -1.9 -0.2z" fill="#2a2912" opacity="0.8"/>
<path d="M1076 623q2.5 -1.1 3.7 0.9q-2.5 1.1 -3.7 -0.9zM1053 573q1.6 -1.3 2.1 0.4q-1.6 1.3 -2.1 -0.4zM1174 381q1.1 -0.7 1.5 0.5q-1.1 0.7 -1.5 -0.5zM1125 471q1.6 -0.6 2.4 0.7q-1.6 0.6 -2.4 -0.7zM1117 410q1.5 -1.5 1.7 0.4q-1.5 1.5 -1.7 -0.4zM1109 554q1.2 -0.6 1.6 0.6q-1.2 0.6 -1.6 -0.6zM1142 479q1.1 -0.5 1.5 0.6q-1.1 0.5 -1.5 -0.6zM1144 348q1.8 -1.3 2.2 1.0q-1.8 1.3 -2.2 -1.0zM1091 468q1.5 -1.5 1.6 0.5q-1.5 1.5 -1.6 -0.5zM1074 495q1.5 -0.8 2.2 0.3q-1.5 0.8 -2.2 -0.3zM1043 584q2.1 -0.7 3.1 1.5q-2.1 0.7 -3.1 -1.5zM1158 429q2.2 -1.0 3.1 1.2q-2.2 1.0 -3.1 -1.2zM1123 420q2.2 -1.0 3.3 0.6q-2.2 1.0 -3.3 -0.6zM1080 559q2.2 -0.7 3.7 0.4q-2.2 0.7 -3.7 -0.4zM1075 575q2.0 -0.4 3.2 1.0q-2.0 0.4 -3.2 -1.0zM1056 575q1.6 -0.5 2.4 1.1q-1.6 0.5 -2.4 -1.1zM1066 591q1.8 -0.9 2.5 0.8q-1.8 0.9 -2.5 -0.8zM1184 346q1.4 -1.3 1.5 0.7q-1.4 1.3 -1.5 -0.7zM1042 529q1.9 -0.6 2.9 0.9q-1.9 0.6 -2.9 -0.9zM1145 377q1.5 -0.7 2.0 1.1q-1.5 0.7 -2.0 -1.1zM1134 441q1.5 -0.8 1.9 0.8q-1.5 0.8 -1.9 -0.8zM1071 637q1.5 -1.3 1.6 0.8q-1.5 1.3 -1.6 -0.8zM1086 594q2.0 -0.3 3.1 1.6q-2.0 0.3 -3.1 -1.6zM1082 475q1.4 -0.4 2.1 1.0q-1.4 0.4 -2.1 -1.0zM1122 417q2.0 -0.2 3.2 1.6q-2.0 0.2 -3.2 -1.6zM1038 598q2.1 -1.1 2.8 1.3q-2.1 1.1 -2.8 -1.3zM1083 519q2.3 -0.7 3.6 0.8q-2.3 0.7 -3.6 -0.8zM1102 509q1.5 -0.8 2.1 0.4q-1.5 0.8 -2.1 -0.4zM1132 375q1.9 -0.0 3.2 1.6q-1.9 0.0 -3.2 -1.6zM1112 453q2.3 -0.5 3.8 1.1q-2.3 0.5 -3.8 -1.1zM1103 422q2.0 -0.7 3.0 1.1q-2.0 0.7 -3.0 -1.1zM1065 556q1.3 -0.7 1.8 0.4q-1.3 0.7 -1.8 -0.4zM1189 331q2.1 -0.0 3.5 1.6q-2.1 0.0 -3.5 -1.6zM1121 536q1.4 -1.4 1.5 0.5q-1.4 1.4 -1.5 -0.5zM1148 410q2.0 -0.4 3.1 1.4q-2.0 0.4 -3.1 -1.4zM1103 498q2.4 -1.2 3.4 1.0q-2.4 1.2 -3.4 -1.0zM1090 595q2.0 -0.1 3.3 1.5q-2.0 0.1 -3.3 -1.5zM1110 549q2.1 -0.7 3.0 1.4q-2.1 0.7 -3.0 -1.4zM1110 408q1.3 -1.1 1.6 0.3q-1.3 1.1 -1.6 -0.3zM1063 501q2.1 -1.0 3.1 0.4q-2.1 1.0 -3.1 -0.4zM1118 412q2.1 0.1 3.4 1.9q-2.1 -0.1 -3.4 -1.9zM1057 552q1.8 -0.5 2.6 1.3q-1.8 0.5 -2.6 -1.3zM1160 326q2.1 -0.6 3.4 0.7q-2.1 0.6 -3.4 -0.7zM1119 560q1.6 -1.3 2.0 0.3q-1.6 1.3 -2.0 -0.3zM1104 529q1.3 -0.9 1.7 0.2q-1.3 0.9 -1.7 -0.2zM1044 538q2.5 -1.1 3.9 0.8q-2.5 1.1 -3.9 -0.8zM1145 472q2.3 -1.2 3.5 0.4q-2.3 1.2 -3.5 -0.4zM1183 344q1.4 -1.4 1.6 0.3q-1.4 1.4 -1.6 -0.3zM1154 421q2.2 -1.2 3.1 0.8q-2.2 1.2 -3.1 -0.8zM1090 603q2.4 -0.7 3.6 1.7q-2.4 0.7 -3.6 -1.7zM1117 504q1.3 -0.6 1.9 0.7q-1.3 0.6 -1.9 -0.7zM1138 455q1.9 -1.5 2.4 0.5q-1.9 1.5 -2.4 -0.5zM1117 430q1.3 -0.4 2.0 0.9q-1.3 0.4 -2.0 -0.9zM1091 527q2.3 -0.8 3.3 1.3q-2.3 0.8 -3.3 -1.3zM1086 595q2.2 -0.5 3.6 1.0q-2.2 0.5 -3.6 -1.0zM1069 517q2.1 -0.6 3.3 1.1q-2.1 0.6 -3.3 -1.1zM1093 450q1.7 -0.5 2.5 1.2q-1.7 0.5 -2.5 -1.2zM1178 373q2.2 -0.6 3.3 1.6q-2.2 0.6 -3.3 -1.6zM1049 528q2.0 -1.3 2.8 0.4q-2.0 1.3 -2.8 -0.4z" fill="#4a4824" opacity="0.8"/>
<path d="M1081 555q1.3 -0.8 1.5 0.8q-1.3 0.8 -1.5 -0.8zM1167 397q2.2 -0.3 3.5 1.5q-2.2 0.3 -3.5 -1.5zM1045 621q1.9 -1.0 2.8 0.7q-1.9 1.0 -2.8 -0.7zM1094 580q2.4 -1.2 3.5 0.8q-2.4 1.2 -3.5 -0.8zM1099 482q1.4 -1.0 1.8 0.5q-1.4 1.0 -1.8 -0.5zM1125 509q1.8 -0.4 2.8 1.1q-1.8 0.4 -2.8 -1.1zM1100 477q1.4 -0.9 1.8 0.7q-1.4 0.9 -1.8 -0.7zM1190 369q1.2 -0.8 1.5 0.5q-1.2 0.8 -1.5 -0.5zM1164 406q1.9 -0.2 2.9 1.5q-1.9 0.2 -2.9 -1.5zM1073 582q2.3 -0.9 3.2 1.5q-2.3 0.9 -3.2 -1.5zM1048 542q2.0 -0.5 3.4 0.6q-2.0 0.5 -3.4 -0.6zM1109 499q1.5 -1.0 2.1 0.3q-1.5 1.0 -2.1 -0.3zM1081 547q2.1 -0.9 3.3 0.5q-2.1 0.9 -3.3 -0.5zM1095 550q1.7 -0.6 2.7 0.7q-1.7 0.6 -2.7 -0.7zM1081 570q2.4 -0.8 3.6 1.3q-2.4 0.8 -3.6 -1.3zM1113 454q1.3 -0.8 1.7 0.4q-1.3 0.8 -1.7 -0.4zM1142 391q2.5 -1.0 3.7 1.0q-2.5 1.0 -3.7 -1.0zM1119 448q2.2 -0.5 3.8 0.6q-2.2 0.5 -3.8 -0.6zM1174 316q2.2 -0.9 3.2 1.0q-2.2 0.9 -3.2 -1.0zM1108 413q2.0 -1.1 2.8 0.4q-2.0 1.1 -2.8 -0.4zM1183 395q2.4 -0.8 3.5 1.9q-2.4 0.8 -3.5 -1.9zM1074 582q2.0 -1.1 3.0 0.5q-2.0 1.1 -3.0 -0.5z" fill="#d0cb86" opacity="0.8"/>
<path d="M1173 386q2.0 -0.7 3.2 0.4q-2.0 0.7 -3.2 -0.4zM1105 574q1.6 -0.4 2.5 0.8q-1.6 0.4 -2.5 -0.8zM1165 369q2.2 -1.2 3.1 1.1q-2.2 1.2 -3.1 -1.1zM1084 580q2.5 -1.3 3.6 0.7q-2.5 1.3 -3.6 -0.7zM1145 333q2.3 -0.4 3.6 1.6q-2.3 0.4 -3.6 -1.6zM1057 503q1.2 -0.4 1.8 0.8q-1.2 0.4 -1.8 -0.8zM1109 429q2.1 -0.8 3.4 0.5q-2.1 0.8 -3.4 -0.5zM1160 443q2.4 -0.9 3.8 0.7q-2.4 0.9 -3.8 -0.7zM1130 484q2.2 -0.9 3.3 0.6q-2.2 0.9 -3.3 -0.6zM1145 400q2.2 -0.8 3.2 1.4q-2.2 0.8 -3.2 -1.4zM1112 547q1.7 -0.9 2.2 1.0q-1.7 0.9 -2.2 -1.0zM1043 513q1.9 -0.5 2.8 1.4q-1.9 0.5 -2.8 -1.4zM1161 336q2.3 -1.1 3.4 0.8q-2.3 1.1 -3.4 -0.8zM1128 375q2.1 -0.4 3.4 1.3q-2.1 0.4 -3.4 -1.3zM1084 589q1.6 -0.9 2.2 0.6q-1.6 0.9 -2.2 -0.6zM1051 581q1.1 -0.6 1.4 0.7q-1.1 0.6 -1.4 -0.7zM1074 514q1.6 -1.3 2.0 0.3q-1.6 1.3 -2.0 -0.3zM1081 578q1.4 -0.9 1.9 0.2q-1.4 0.9 -1.9 -0.2z" fill="#b9b474" opacity="0.8"/>
<path d="M999 595q4.0 -0.4 6.9 1.9q-4.0 0.4 -6.9 -1.9zM1050 532q4.3 0.8 7.6 4.1q-4.3 -0.8 -7.6 -4.1zM1179 710q4.3 0.8 7.8 3.8q-4.3 -0.8 -7.8 -3.8zM1204 629q2.8 -0.5 4.3 2.3q-2.8 0.5 -4.3 -2.3zM1079 578q4.4 0.4 8.2 2.6q-4.4 -0.4 -8.2 -2.6zM974 545q3.8 0.3 6.8 2.5q-3.8 -0.3 -6.8 -2.5zM1197 784q1.8 -0.2 2.8 1.3q-1.8 0.2 -2.8 -1.3zM1193 729q3.4 0.7 6.0 3.2q-3.4 -0.7 -6.0 -3.2zM1079 760q2.6 -0.5 4.4 1.2q-2.6 0.5 -4.4 -1.2zM1178 780q3.7 -0.0 6.7 1.8q-3.7 0.0 -6.7 -1.8zM1066 612q2.6 -0.5 3.9 2.2q-2.6 0.5 -3.9 -2.2zM1136 701q2.9 -0.3 5.1 1.3q-2.9 0.3 -5.1 -1.3zM1023 522q3.9 0.6 7.0 3.0q-3.9 -0.6 -7.0 -3.0zM929 547q4.1 -0.8 7.1 1.3q-4.1 0.8 -7.1 -1.3zM841 608q2.5 -0.0 4.3 1.8q-2.5 0.0 -4.3 -1.8zM813 553q3.4 -0.2 5.7 2.1q-3.4 0.2 -5.7 -2.1zM1264 727q4.2 -1.0 6.9 1.4q-4.2 1.0 -6.9 -1.4zM1172 687q2.8 -0.8 4.6 0.7q-2.8 0.8 -4.6 -0.7zM1207 658q3.0 0.3 5.2 2.6q-3.0 -0.3 -5.2 -2.6zM1052 629q2.1 -0.9 3.2 0.4q-2.1 0.9 -3.2 -0.4zM971 571q3.8 -0.8 6.2 1.8q-3.8 0.8 -6.2 -1.8zM950 603q4.9 -0.8 8.7 0.9q-4.9 0.8 -8.7 -0.9zM843 533q3.4 -0.1 6.2 1.5q-3.4 0.1 -6.2 -1.5zM909 549q3.4 -0.8 5.5 1.9q-3.4 0.8 -5.5 -1.9zM1153 715q4.1 0.0 7.0 2.9q-4.1 -0.0 -7.0 -2.9zM825 539q2.3 -0.9 3.4 1.3q-2.3 0.9 -3.4 -1.3zM927 674q3.1 -0.1 5.2 2.1q-3.1 0.1 -5.2 -2.1zM821 607q3.6 0.2 6.1 2.9q-3.6 -0.2 -6.1 -2.9zM1091 618q4.7 -0.9 8.1 1.4q-4.7 0.9 -8.1 -1.4zM1227 686q2.4 -0.4 3.8 1.5q-2.4 0.4 -3.8 -1.5zM912 514q4.3 0.4 7.3 4.0q-4.3 -0.4 -7.3 -4.0zM1049 670q2.3 -0.7 3.4 1.8q-2.3 0.7 -3.4 -1.8zM1002 550q4.9 -0.4 8.5 2.5q-4.9 0.4 -8.5 -2.5zM1241 673q4.0 -0.3 7.1 1.5q-4.0 0.3 -7.1 -1.5zM956 531q3.1 -0.4 5.5 1.1q-3.1 0.4 -5.5 -1.1zM1158 737q4.2 -0.1 7.6 1.7q-4.2 0.1 -7.6 -1.7zM1190 702q3.1 -0.8 4.9 1.8q-3.1 0.8 -4.9 -1.8zM1017 689q2.1 -0.9 3.2 0.7q-2.1 0.9 -3.2 -0.7zM1237 783q3.8 -0.7 6.2 1.9q-3.8 0.7 -6.2 -1.9zM986 501q4.9 -0.9 8.6 1.5q-4.9 0.9 -8.6 -1.5zM967 675q3.8 -0.8 6.6 0.7q-3.8 0.8 -6.6 -0.7zM956 670q2.4 -1.1 3.6 0.8q-2.4 1.1 -3.6 -0.8zM1239 759q3.2 -0.4 5.1 2.7q-3.2 0.4 -5.1 -2.7zM817 594q4.4 1.0 8.0 4.2q-4.4 -1.0 -8.0 -4.2zM1018 669q2.8 -0.3 4.9 1.2q-2.8 0.3 -4.9 -1.2zM1128 761q2.4 -0.2 3.8 1.8q-2.4 0.2 -3.8 -1.8zM1042 747q2.6 -0.9 4.0 1.3q-2.6 0.9 -4.0 -1.3zM887 570q4.6 -0.0 7.9 3.0q-4.6 0.0 -7.9 -3.0zM1032 743q3.9 -0.5 7.0 1.1q-3.9 0.5 -7.0 -1.1zM943 518q3.3 -0.1 5.6 2.3q-3.3 0.1 -5.6 -2.3zM1042 658q2.4 -1.0 3.6 0.6q-2.4 1.0 -3.6 -0.6zM988 507q3.0 -0.2 5.3 1.4q-3.0 0.2 -5.3 -1.4zM895 518q2.1 -0.5 3.2 1.3q-2.1 0.5 -3.2 -1.3zM1164 684q4.4 0.7 8.1 3.4q-4.4 -0.7 -8.1 -3.4zM1035 612q3.9 -0.1 6.4 3.4q-3.9 0.1 -6.4 -3.4zM1061 665q2.2 -1.0 3.3 0.8q-2.2 1.0 -3.3 -0.8zM1040 672q2.4 -0.3 4.2 1.2q-2.4 0.3 -4.2 -1.2zM944 497q3.1 -0.7 5.4 0.7q-3.1 0.7 -5.4 -0.7zM894 579q2.4 -0.9 3.4 1.7q-2.4 0.9 -3.4 -1.7zM928 677q2.7 -0.8 4.5 0.7q-2.7 0.8 -4.5 -0.7zM992 696q2.4 -0.7 4.1 0.4q-2.4 0.7 -4.1 -0.4zM1108 764q2.2 -0.8 3.6 0.6q-2.2 0.8 -3.6 -0.6zM932 650q2.5 -0.9 3.8 1.1q-2.5 0.9 -3.8 -1.1zM796 560q4.5 0.5 8.0 3.8q-4.5 -0.5 -8.0 -3.8zM818 500q2.5 -1.3 3.9 0.5q-2.5 1.3 -3.9 -0.5zM1130 696q3.0 -0.4 4.7 2.5q-3.0 0.4 -4.7 -2.5zM1214 688q3.9 -0.9 6.5 1.4q-3.9 0.9 -6.5 -1.4zM1147 649q3.4 -0.3 5.4 2.5q-3.4 0.3 -5.4 -2.5zM793 476q3.8 -0.6 6.6 1.4q-3.8 0.6 -6.6 -1.4z" fill="#4a4824" opacity="0.55"/>
<path d="M858 498q4.7 -0.5 8.0 2.4q-4.7 0.5 -8.0 -2.4zM1161 742q3.6 0.5 6.5 3.0q-3.6 -0.5 -6.5 -3.0zM1064 558q3.4 -1.4 5.3 0.7q-3.4 1.4 -5.3 -0.7zM941 673q5.1 -0.9 8.8 1.7q-5.1 0.9 -8.8 -1.7zM1019 655q4.0 -0.0 6.9 2.5q-4.0 0.0 -6.9 -2.5zM1156 727q2.5 -0.1 4.1 1.8q-2.5 0.1 -4.1 -1.8zM1155 685q3.2 0.2 5.3 2.9q-3.2 -0.2 -5.3 -2.9zM1197 667q3.7 -0.5 6.6 1.1q-3.7 0.5 -6.6 -1.1zM1133 661q3.6 0.2 6.0 3.1q-3.6 -0.2 -6.0 -3.1zM1040 615q3.6 0.2 6.6 2.0q-3.6 -0.2 -6.6 -2.0zM1191 683q3.3 -0.7 5.5 1.2q-3.3 0.7 -5.5 -1.2zM892 552q2.5 -0.2 4.2 1.7q-2.5 0.2 -4.2 -1.7zM825 519q3.3 -0.0 5.5 2.9q-3.3 0.0 -5.5 -2.9zM1057 560q3.1 0.1 5.3 2.2q-3.1 -0.1 -5.3 -2.2zM1239 763q3.1 -0.5 5.2 1.6q-3.1 0.5 -5.2 -1.6zM1048 641q4.8 -0.2 8.8 1.4q-4.8 0.2 -8.8 -1.4zM889 545q2.3 -1.5 3.3 0.4q-2.3 1.5 -3.3 -0.4zM1021 627q2.2 -1.1 3.0 1.3q-2.2 1.1 -3.0 -1.3zM1038 724q3.7 -0.7 6.3 1.5q-3.7 0.7 -6.3 -1.5zM1013 668q2.8 -0.1 4.9 1.7q-2.8 0.1 -4.9 -1.7zM1251 696q4.3 0.7 7.7 3.6q-4.3 -0.7 -7.7 -3.6zM1210 627q3.3 -1.1 5.2 0.9q-3.3 1.1 -5.2 -0.9zM1169 619q3.8 -0.9 6.4 0.9q-3.8 0.9 -6.4 -0.9zM941 538q4.2 0.5 7.3 3.6q-4.2 -0.5 -7.3 -3.6zM902 666q2.9 -1.0 4.5 1.0q-2.9 1.0 -4.5 -1.0zM820 568q3.3 -0.2 5.3 2.8q-3.3 0.2 -5.3 -2.8zM1115 690q3.5 -0.7 5.7 2.0q-3.5 0.7 -5.7 -2.0zM1147 736q3.0 -0.2 5.2 1.7q-3.0 0.2 -5.2 -1.7zM858 620q3.3 -0.8 5.6 0.9q-3.3 0.8 -5.6 -0.9zM1072 668q3.2 -0.4 5.1 2.5q-3.2 0.4 -5.1 -2.5zM1005 511q3.8 -0.5 6.4 2.2q-3.8 0.5 -6.4 -2.2zM1163 634q4.5 -0.9 8.1 0.8q-4.5 0.9 -8.1 -0.8zM1002 608q3.6 -0.8 5.8 1.9q-3.6 0.8 -5.8 -1.9zM902 592q3.6 -0.3 6.2 2.0q-3.6 0.3 -6.2 -2.0zM1211 623q4.0 0.4 6.9 3.5q-4.0 -0.4 -6.9 -3.5zM990 657q4.7 -1.2 8.0 1.1q-4.7 1.2 -8.0 -1.1zM926 533q4.0 -0.7 7.0 1.1q-4.0 0.7 -7.0 -1.1zM1027 523q3.3 -1.0 5.3 1.2q-3.3 1.0 -5.3 -1.2zM800 549q4.4 -1.0 7.7 1.0q-4.4 1.0 -7.7 -1.0zM944 543q3.9 -0.8 6.6 1.3q-3.9 0.8 -6.6 -1.3zM953 578q2.4 -0.4 4.0 1.3q-2.4 0.4 -4.0 -1.3zM766 500q4.3 0.0 7.8 2.1q-4.3 -0.0 -7.8 -2.1zM949 608q4.3 -0.8 7.3 1.7q-4.3 0.8 -7.3 -1.7zM1065 715q2.2 -0.8 3.2 1.3q-2.2 0.8 -3.2 -1.3zM1217 647q3.8 -0.2 6.3 2.9q-3.8 0.2 -6.3 -2.9zM835 562q3.9 -0.6 6.5 2.1q-3.9 0.6 -6.5 -2.1zM970 715q3.5 -0.1 5.9 2.5q-3.5 0.1 -5.9 -2.5zM967 561q4.4 0.2 8.0 2.4q-4.4 -0.2 -8.0 -2.4zM1088 577q3.4 -1.0 5.8 0.6q-3.4 1.0 -5.8 -0.6zM823 512q2.2 -1.2 3.1 0.8q-2.2 1.2 -3.1 -0.8zM843 625q2.1 -0.8 2.9 1.5q-2.1 0.8 -2.9 -1.5zM1110 631q4.0 -0.8 6.9 0.9q-4.0 0.8 -6.9 -0.9zM1226 735q4.8 -0.3 8.2 2.7q-4.8 0.3 -8.2 -2.7z" fill="#908c5a" opacity="0.55"/>
<path d="M1219 796q2.8 -0.7 4.6 1.0q-2.8 0.7 -4.6 -1.0zM888 554q2.0 -0.8 3.0 0.9q-2.0 0.8 -3.0 -0.9zM1012 540q1.9 -0.2 3.0 1.5q-1.9 0.2 -3.0 -1.5zM938 505q3.9 -0.8 6.6 1.3q-3.9 0.8 -6.6 -1.3zM1208 682q2.3 -0.5 4.0 0.7q-2.3 0.5 -4.0 -0.7zM950 681q3.1 -0.3 5.1 1.9q-3.1 0.3 -5.1 -1.9zM1040 614q3.5 -1.0 6.0 0.9q-3.5 1.0 -6.0 -0.9zM1252 801q4.0 0.0 7.1 2.5q-4.0 -0.0 -7.1 -2.5zM1085 596q2.9 -0.8 4.6 1.1q-2.9 0.8 -4.6 -1.1zM1118 648q4.2 -0.9 7.1 1.1q-4.2 0.9 -7.1 -1.1zM1144 721q2.8 -0.5 4.9 0.8q-2.8 0.5 -4.9 -0.8zM1212 640q2.6 -1.4 3.8 0.7q-2.6 1.4 -3.8 -0.7zM1245 769q2.4 -0.1 4.2 1.6q-2.4 0.1 -4.2 -1.6zM1199 727q2.9 -0.8 4.5 1.9q-2.9 0.8 -4.5 -1.9zM1120 631q2.8 -0.0 4.7 2.4q-2.8 0.0 -4.7 -2.4zM1024 607q2.8 -1.5 4.1 0.6q-2.8 1.5 -4.1 -0.6zM1048 692q4.5 -0.7 7.7 1.9q-4.5 0.7 -7.7 -1.9zM1200 617q3.4 -0.5 6.2 0.7q-3.4 0.5 -6.2 -0.7zM942 613q2.1 -0.3 3.6 1.1q-2.1 0.3 -3.6 -1.1zM1163 742q4.4 -1.1 7.5 1.3q-4.4 1.1 -7.5 -1.3zM1139 648q3.7 -0.1 6.5 2.2q-3.7 0.1 -6.5 -2.2zM1011 571q3.7 -1.0 6.0 1.4q-3.7 1.0 -6.0 -1.4zM1035 535q3.3 -0.2 5.6 2.2q-3.3 0.2 -5.6 -2.2zM953 665q2.2 0.1 3.7 1.9q-2.2 -0.1 -3.7 -1.9zM1157 714q3.7 -0.3 6.3 2.0q-3.7 0.3 -6.3 -2.0zM1292 691q2.7 -0.8 4.4 1.2q-2.7 0.8 -4.4 -1.2zM1005 704q3.4 -0.5 5.8 1.8q-3.4 0.5 -5.8 -1.8zM1051 658q4.5 0.1 8.0 3.0q-4.5 -0.1 -8.0 -3.0zM1158 734q4.5 0.1 8.2 2.3q-4.5 -0.1 -8.2 -2.3zM997 553q4.5 0.2 8.1 2.8q-4.5 -0.2 -8.1 -2.8zM1237 714q3.5 -0.7 5.9 1.4q-3.5 0.7 -5.9 -1.4zM1204 697q4.0 -0.4 6.7 2.7q-4.0 0.4 -6.7 -2.7zM783 524q2.6 -0.4 4.1 1.9q-2.6 0.4 -4.1 -1.9zM1200 732q3.6 -0.5 5.8 2.5q-3.6 0.5 -5.8 -2.5zM1071 655q3.1 -0.6 5.2 1.7q-3.1 0.6 -5.2 -1.7zM1017 720q2.3 -0.8 3.4 1.1q-2.3 0.8 -3.4 -1.1zM844 579q4.3 0.4 7.8 2.5q-4.3 -0.4 -7.8 -2.5zM1151 783q2.2 -0.9 3.1 1.3q-2.2 0.9 -3.1 -1.3zM985 547q3.9 -0.4 6.7 1.9q-3.9 0.4 -6.7 -1.9zM1094 698q3.5 0.9 6.4 3.5q-3.5 -0.9 -6.4 -3.5zM792 557q2.4 0.0 3.9 2.1q-2.4 -0.0 -3.9 -2.1zM819 544q3.2 -0.5 5.5 1.3q-3.2 0.5 -5.5 -1.3zM798 481q3.2 -0.4 4.9 2.6q-3.2 0.4 -4.9 -2.6zM900 577q4.6 -0.6 8.2 0.9q-4.6 0.6 -8.2 -0.9zM1118 679q3.5 -1.2 5.6 0.9q-3.5 1.2 -5.6 -0.9zM995 506q3.7 0.6 6.7 3.0q-3.7 -0.6 -6.7 -3.0zM1058 682q4.0 -1.1 6.7 0.9q-4.0 1.1 -6.7 -0.9zM886 578q3.0 -0.9 4.9 1.2q-3.0 0.9 -4.9 -1.2zM935 510q2.1 -0.8 3.0 1.3q-2.1 0.8 -3.0 -1.3zM856 557q3.1 0.3 5.5 2.6q-3.1 -0.3 -5.5 -2.6zM946 512q3.5 -0.3 6.0 2.2q-3.5 0.3 -6.0 -2.2zM1162 736q2.4 -1.2 3.6 0.9q-2.4 1.2 -3.6 -0.9zM1168 640q3.5 0.1 5.9 3.1q-3.5 -0.1 -5.9 -3.1zM953 565q4.5 0.2 7.7 3.9q-4.5 -0.2 -7.7 -3.9zM1013 555q4.2 -0.7 7.4 1.2q-4.2 0.7 -7.4 -1.2zM1307 768q3.2 -0.5 5.6 1.3q-3.2 0.5 -5.6 -1.3zM887 484q2.3 -1.1 3.2 1.4q-2.3 1.1 -3.2 -1.4zM1153 745q2.4 -1.0 3.6 1.1q-2.4 1.0 -3.6 -1.1zM1035 541q3.9 -0.2 6.7 2.4q-3.9 0.2 -6.7 -2.4zM907 557q4.5 -0.6 8.1 1.1q-4.5 0.6 -8.1 -1.1zM869 611q3.4 -0.6 6.0 0.9q-3.4 0.6 -6.0 -0.9zM1087 549q3.6 -0.5 6.2 1.6q-3.6 0.5 -6.2 -1.6zM899 492q4.0 -1.3 6.7 0.7q-4.0 1.3 -6.7 -0.7zM1204 698q3.7 -0.8 6.4 1.0q-3.7 0.8 -6.4 -1.0zM1096 689q3.4 -0.6 5.8 1.5q-3.4 0.6 -5.8 -1.5zM768 518q2.8 -0.2 4.8 1.6q-2.8 0.2 -4.8 -1.6zM1159 781q4.7 -0.9 8.0 1.7q-4.7 0.9 -8.0 -1.7zM1231 754q2.6 -0.6 4.2 1.1q-2.6 0.6 -4.2 -1.1zM817 590q2.2 -0.8 3.1 1.6q-2.2 0.8 -3.1 -1.6zM964 561q4.5 0.2 8.0 3.2q-4.5 -0.2 -8.0 -3.2zM965 652q2.4 -0.4 4.1 1.2q-2.4 0.4 -4.1 -1.2zM1166 637q5.0 -0.6 8.8 1.6q-5.0 0.6 -8.8 -1.6z" fill="#5c5a32" opacity="0.55"/>
<path d="M1204 692q2.9 -0.5 4.5 2.3q-2.9 0.5 -4.5 -2.3zM913 613q3.6 -0.7 5.9 1.7q-3.6 0.7 -5.9 -1.7zM1031 607q4.7 -0.1 8.6 1.7q-4.7 0.1 -8.6 -1.7zM1242 758q3.3 -0.2 5.3 2.8q-3.3 0.2 -5.3 -2.8zM1090 664q1.9 -0.7 2.9 1.1q-1.9 0.7 -2.9 -1.1zM1096 694q1.8 -0.4 2.7 1.3q-1.8 0.4 -2.7 -1.3zM1215 745q2.2 -0.6 3.4 1.1q-2.2 0.6 -3.4 -1.1zM981 517q3.9 -0.3 6.9 1.5q-3.9 0.3 -6.9 -1.5zM1143 741q3.5 -0.7 6.2 0.9q-3.5 0.7 -6.2 -0.9zM805 552q3.6 0.3 6.6 2.4q-3.6 -0.3 -6.6 -2.4zM983 536q3.7 -0.4 6.0 2.5q-3.7 0.4 -6.0 -2.5zM1059 704q2.4 -1.0 3.7 0.5q-2.4 1.0 -3.7 -0.5zM924 508q3.4 -1.1 5.5 1.2q-3.4 1.1 -5.5 -1.2zM1160 738q2.9 -1.1 4.5 1.1q-2.9 1.1 -4.5 -1.1zM883 595q3.0 -0.2 5.1 1.9q-3.0 0.2 -5.1 -1.9zM819 491q3.5 -0.5 5.6 2.4q-3.5 0.5 -5.6 -2.4zM1176 680q2.5 0.0 4.1 2.2q-2.5 -0.0 -4.1 -2.2zM1109 576q2.0 -0.9 2.8 1.2q-2.0 0.9 -2.8 -1.2zM1076 630q3.2 -1.3 5.1 0.7q-3.2 1.3 -5.1 -0.7zM1084 722q3.6 -0.3 6.1 2.3q-3.6 0.3 -6.1 -2.3zM945 577q2.5 -0.7 4.1 0.9q-2.5 0.7 -4.1 -0.9zM1120 584q3.5 -0.8 5.9 1.2q-3.5 0.8 -5.9 -1.2zM1062 750q2.8 -0.2 4.9 1.3q-2.8 0.2 -4.9 -1.3zM926 679q4.4 -0.5 7.5 2.2q-4.4 0.5 -7.5 -2.2zM929 652q2.0 -0.7 3.1 0.5q-2.0 0.7 -3.1 -0.5zM1135 665q2.5 -1.2 3.7 0.9q-2.5 1.2 -3.7 -0.9zM796 549q3.4 -0.6 6.0 1.0q-3.4 0.6 -6.0 -1.0zM967 642q2.2 -0.4 3.4 1.7q-2.2 0.4 -3.4 -1.7zM1181 766q2.8 -0.2 4.8 1.9q-2.8 0.2 -4.8 -1.9zM931 497q2.7 -1.4 4.1 0.5q-2.7 1.4 -4.1 -0.5zM1058 655q3.3 0.1 5.6 2.8q-3.3 -0.1 -5.6 -2.8zM834 552q4.0 -0.4 6.6 2.5q-4.0 0.4 -6.6 -2.5zM1241 758q4.0 0.2 6.7 3.5q-4.0 -0.2 -6.7 -3.5zM890 575q3.2 0.6 5.7 2.9q-3.2 -0.6 -5.7 -2.9zM893 549q2.8 -0.3 4.9 1.0q-2.8 0.3 -4.9 -1.0zM1057 570q3.8 0.1 6.6 2.3q-3.8 -0.1 -6.6 -2.3zM1175 701q4.2 -0.6 7.0 2.0q-4.2 0.6 -7.0 -2.0zM1256 757q4.0 0.7 7.1 3.4q-4.0 -0.7 -7.1 -3.4zM908 658q2.7 0.1 4.6 2.2q-2.7 -0.1 -4.6 -2.2zM914 643q4.8 -0.0 8.3 3.2q-4.8 0.0 -8.3 -3.2zM863 502q3.7 -0.2 6.4 2.2q-3.7 0.2 -6.4 -2.2zM972 514q4.5 -0.6 8.1 1.4q-4.5 0.6 -8.1 -1.4zM798 508q2.6 -1.0 3.8 1.4q-2.6 1.0 -3.8 -1.4zM1104 741q2.3 -0.8 3.2 1.7q-2.3 0.8 -3.2 -1.7zM1163 625q3.7 -0.8 6.4 0.7q-3.7 0.8 -6.4 -0.7zM956 491q4.4 1.0 8.1 3.7q-4.4 -1.0 -8.1 -3.7zM1147 673q4.0 -0.5 6.6 2.6q-4.0 0.5 -6.6 -2.6zM1176 662q3.1 -0.5 5.4 0.7q-3.1 0.5 -5.4 -0.7zM1226 677q2.5 -0.5 4.2 1.1q-2.5 0.5 -4.2 -1.1zM954 536q4.4 -0.1 8.0 1.7q-4.4 0.1 -8.0 -1.7zM1080 617q2.8 -1.1 4.3 0.8q-2.8 1.1 -4.3 -0.8zM1137 636q4.6 -0.0 8.3 2.5q-4.6 0.0 -8.3 -2.5zM915 582q3.9 -1.0 6.7 0.7q-3.9 1.0 -6.7 -0.7zM957 576q4.2 -0.4 7.0 2.5q-4.2 0.4 -7.0 -2.5zM1179 653q4.3 0.9 7.9 3.5q-4.3 -0.9 -7.9 -3.5zM1029 555q2.6 -1.3 3.9 0.6q-2.6 1.3 -3.9 -0.6zM851 549q2.2 -0.5 3.8 0.6q-2.2 0.5 -3.8 -0.6zM973 530q2.5 -1.2 3.9 0.4q-2.5 1.2 -3.9 -0.4zM1307 760q2.1 -0.2 3.3 1.7q-2.1 0.2 -3.3 -1.7zM819 553q4.5 -0.8 7.6 1.9q-4.5 0.8 -7.6 -1.9zM936 671q3.9 0.9 7.1 3.6q-3.9 -0.9 -7.1 -3.6zM1125 633q3.4 -0.5 5.7 1.7q-3.4 0.5 -5.7 -1.7zM918 625q4.6 -0.0 8.3 2.2q-4.6 0.0 -8.3 -2.2zM961 553q2.6 -1.3 3.9 0.4q-2.6 1.3 -3.9 -0.4zM943 692q4.1 -0.6 6.9 2.3q-4.1 0.6 -6.9 -2.3zM1147 634q3.6 -0.8 6.2 0.8q-3.6 0.8 -6.2 -0.8z" fill="#a39e66" opacity="0.55"/>
<path d="M1232 747q3.2 0.5 5.7 2.7q-3.2 -0.5 -5.7 -2.7zM1145 716q3.9 0.0 6.8 2.5q-3.9 -0.0 -6.8 -2.5zM1130 733q3.2 -0.8 5.3 1.0q-3.2 0.8 -5.3 -1.0zM1251 775q3.5 0.1 5.9 2.8q-3.5 -0.1 -5.9 -2.8zM1212 766q3.9 0.6 7.0 2.9q-3.9 -0.6 -7.0 -2.9zM1133 740q2.7 -1.0 4.3 0.8q-2.7 1.0 -4.3 -0.8zM1202 714q3.0 0.1 5.1 2.3q-3.0 -0.1 -5.1 -2.3zM1092 757q3.1 -0.3 5.2 1.7q-3.1 0.3 -5.2 -1.7zM1205 735q2.1 -0.4 3.2 1.7q-2.1 0.4 -3.2 -1.7zM1151 772q2.4 -0.5 3.6 2.0q-2.4 0.5 -3.6 -2.0zM1214 787q2.8 -1.1 4.3 1.1q-2.8 1.1 -4.3 -1.1zM1238 746q2.6 -1.0 4.0 0.8q-2.6 1.0 -4.0 -0.8zM1179 683q2.0 -1.0 3.2 0.4q-2.0 1.0 -3.2 -0.4zM1223 784q4.0 -0.7 6.6 2.2q-4.0 0.7 -6.6 -2.2zM1227 723q3.4 -0.2 5.8 1.9q-3.4 0.2 -5.8 -1.9zM1180 778q4.1 -0.4 7.1 1.8q-4.1 0.4 -7.1 -1.8zM1167 693q3.4 -0.3 5.8 1.7q-3.4 0.3 -5.8 -1.7zM1192 769q2.9 -0.2 4.7 2.3q-2.9 0.2 -4.7 -2.3z" fill="#64633c" opacity="0.6"/>
<path d="M1169 761q2.1 0.1 3.5 1.9q-2.1 -0.1 -3.5 -1.9zM1214 708q4.0 -0.9 7.0 0.9q-4.0 0.9 -7.0 -0.9zM1207 713q3.8 0.7 6.8 3.4q-3.8 -0.7 -6.8 -3.4zM1180 682q4.2 -0.5 7.2 2.0q-4.2 0.5 -7.2 -2.0zM1132 725q3.2 -0.3 5.6 1.5q-3.2 0.3 -5.6 -1.5zM1169 711q3.6 -1.1 6.0 1.2q-3.6 1.1 -6.0 -1.2zM1231 773q3.0 -0.5 5.3 0.7q-3.0 0.5 -5.3 -0.7zM1171 777q3.8 -0.3 6.3 2.6q-3.8 0.3 -6.3 -2.6zM1153 675q4.2 -0.4 7.3 1.9q-4.2 0.4 -7.3 -1.9zM1101 754q3.1 -0.4 4.9 2.6q-3.1 0.4 -4.9 -2.6zM1195 745q3.0 -0.6 4.9 1.7q-3.0 0.6 -4.9 -1.7zM1171 692q2.8 -1.0 4.2 1.4q-2.8 1.0 -4.2 -1.4zM1183 708q2.1 -0.8 3.0 1.6q-2.1 0.8 -3.0 -1.6zM1083 755q3.1 -0.1 5.2 2.5q-3.1 0.1 -5.2 -2.5zM1143 703q2.1 0.0 3.5 1.8q-2.1 -0.0 -3.5 -1.8zM1238 727q2.4 -0.6 3.7 1.7q-2.4 0.6 -3.7 -1.7zM1166 672q3.0 -0.4 4.9 1.9q-3.0 0.4 -4.9 -1.9zM1236 764q3.2 0.0 5.7 1.8q-3.2 -0.0 -5.7 -1.8zM1170 746q3.4 -0.6 5.8 1.3q-3.4 0.6 -5.8 -1.3zM1174 735q3.2 -1.1 5.2 0.9q-3.2 1.1 -5.2 -0.9zM1157 695q3.2 -0.8 5.3 1.3q-3.2 0.8 -5.3 -1.3zM1241 732q1.9 -0.4 2.9 1.4q-1.9 0.4 -2.9 -1.4z" fill="#1c3e3e" opacity="0.6"/>
<path d="M1194 281q1.5 -1.2 1.7 0.7q-1.5 1.2 -1.7 -0.7zM1297 71q1.5 -1.1 2.1 0.3q-1.5 1.1 -2.1 -0.3zM1209 269q2.1 -1.4 2.8 0.7q-2.1 1.4 -2.8 -0.7zM1262 146q1.6 -0.4 2.4 0.9q-1.6 0.4 -2.4 -0.9zM1294 64q2.0 -1.1 2.7 1.2q-2.0 1.1 -2.7 -1.2zM1213 251q1.6 -0.9 2.0 0.9q-1.6 0.9 -2.0 -0.9zM1312 36q2.0 -0.6 3.2 0.7q-2.0 0.6 -3.2 -0.7zM1208 236q1.1 -0.7 1.3 0.7q-1.1 0.7 -1.3 -0.7zM1322 27q1.5 -1.6 1.6 0.3q-1.5 1.6 -1.6 -0.3zM1319 33q1.9 -0.5 2.8 1.3q-1.9 0.5 -2.8 -1.3zM1292 85q1.8 -1.3 2.3 0.9q-1.8 1.3 -2.3 -0.9zM1183 313q1.3 -0.8 1.8 0.6q-1.3 0.8 -1.8 -0.6zM1323 44q1.4 -1.2 1.6 0.7q-1.4 1.2 -1.6 -0.7zM1329 12q1.8 -0.3 2.8 1.2q-1.8 0.3 -2.8 -1.2zM1305 49q2.1 -0.9 3.1 0.9q-2.1 0.9 -3.1 -0.9zM1189 281q1.7 -1.3 2.2 0.5q-1.7 1.3 -2.2 -0.5zM1241 164q1.3 -0.6 1.8 0.7q-1.3 0.6 -1.8 -0.7zM1195 265q2.2 -1.4 3.0 0.7q-2.2 1.4 -3.0 -0.7zM1174 310q1.9 -0.8 3.0 0.3q-1.9 0.8 -3.0 -0.3zM1300 72q1.1 -0.8 1.4 0.6q-1.1 0.8 -1.4 -0.6zM1326 47q2.0 -0.7 2.9 1.6q-2.0 0.7 -2.9 -1.6zM1188 316q1.4 -0.7 1.9 0.6q-1.4 0.7 -1.9 -0.6zM1248 152q1.7 -1.1 2.5 0.4q-1.7 1.1 -2.5 -0.4zM1265 130q1.1 -0.6 1.5 0.4q-1.1 0.6 -1.5 -0.4zM1254 162q2.1 -1.2 2.9 0.7q-2.1 1.2 -2.9 -0.7zM1302 73q1.8 -1.1 2.3 1.0q-1.8 1.1 -2.3 -1.0zM1236 167q1.5 -1.2 1.9 0.3q-1.5 1.2 -1.9 -0.3zM1244 177q1.6 -0.8 2.3 0.6q-1.6 0.8 -2.3 -0.6zM1333 12q2.1 -0.8 3.2 1.1q-2.1 0.8 -3.2 -1.1zM1312 39q1.3 -0.9 1.6 0.7q-1.3 0.9 -1.6 -0.7z" fill="#55522c" opacity="0.8"/>
<path d="M1190 273q1.5 -1.0 2.0 0.5q-1.5 1.0 -2.0 -0.5zM1220 238q2.3 -1.4 3.2 0.4q-2.3 1.4 -3.2 -0.4zM1179 307q1.4 -1.3 1.6 0.2q-1.4 1.3 -1.6 -0.2zM1310 40q1.9 -0.9 2.8 0.6q-1.9 0.9 -2.8 -0.6zM1333 14q1.9 -0.6 2.9 1.1q-1.9 0.6 -2.9 -1.1zM1293 78q1.9 -1.5 2.4 0.6q-1.9 1.5 -2.4 -0.6zM1322 50q1.8 -1.0 2.5 0.7q-1.8 1.0 -2.5 -0.7zM1209 230q1.4 -0.6 2.0 0.9q-1.4 0.6 -2.0 -0.9zM1335 7q1.4 -1.0 1.9 0.4q-1.4 1.0 -1.9 -0.4zM1211 256q1.8 -0.6 2.9 0.5q-1.8 0.6 -2.9 -0.5zM1331 26q1.8 -1.1 2.4 0.9q-1.8 1.1 -2.4 -0.9zM1333 31q2.0 -0.5 3.0 1.6q-2.0 0.5 -3.0 -1.6zM1243 157q1.5 -1.3 1.7 0.6q-1.5 1.3 -1.7 -0.6zM1178 311q2.0 -0.4 3.0 1.4q-2.0 0.4 -3.0 -1.4zM1171 314q2.2 -1.1 3.4 0.4q-2.2 1.1 -3.4 -0.4zM1342 21q2.3 -1.2 3.1 1.2q-2.3 1.2 -3.1 -1.2zM1249 145q1.4 -0.6 2.0 1.0q-1.4 0.6 -2.0 -1.0zM1168 322q2.1 -0.9 3.2 0.8q-2.1 0.9 -3.2 -0.8zM1220 231q1.2 -1.1 1.5 0.5q-1.2 1.1 -1.5 -0.5zM1246 162q1.5 -1.3 1.7 0.4q-1.5 1.3 -1.7 -0.4zM1245 148q1.4 -0.8 1.9 1.0q-1.4 0.8 -1.9 -1.0zM1344 5q1.6 -1.1 2.1 0.8q-1.6 1.1 -2.1 -0.8zM1343 21q2.1 -0.7 2.9 1.6q-2.1 0.7 -2.9 -1.6zM1245 163q1.3 -0.6 1.9 0.4q-1.3 0.6 -1.9 -0.4zM1256 131q1.6 -0.9 2.3 0.6q-1.6 0.9 -2.3 -0.6zM1312 39q1.8 -1.2 2.4 0.5q-1.8 1.2 -2.4 -0.5zM1216 247q2.1 -0.7 3.3 1.0q-2.1 0.7 -3.3 -1.0zM1330 29q1.9 -0.4 3.0 1.3q-1.9 0.4 -3.0 -1.3zM1192 286q1.8 -0.9 2.4 1.0q-1.8 0.9 -2.4 -1.0zM1340 19q1.5 -0.8 2.0 0.8q-1.5 0.8 -2.0 -0.8z" fill="#3b3a1c" opacity="0.8"/>
<path d="M1208 544.1l3.5 1.9l-3.5 1.1zM1201 578.4l7.9 2.3l-7.9 0.7zM1266 403.2l4.7 2.0l-4.7 1.0zM1240 464.4l7.3 2.2l-7.3 0.8zM1208 543.8l4.8 2.0l-4.8 1.0zM1204 566.7l3.0 1.8l-3.0 1.2zM1202 575.1l7.8 2.3l-7.8 0.7zM1184 625.3l7.0 2.2l-7.0 0.8zM1250 339.3l5.6 2.1l-5.6 0.9zM1185 623.5l6.1 2.1l-6.1 0.9zM1194 601.3l7.8 2.3l-7.8 0.7zM1250 347.0l7.2 2.2l-7.2 0.8zM1213 516.8l7.8 2.3l-7.8 0.7zM1186 620.3l6.0 2.1l-6.0 0.9zM1231 478.2l3.6 1.9l-3.6 1.1zM1264 408.4l7.3 2.2l-7.3 0.8zM1227 322.2l5.4 2.0l-5.4 1.0zM1251 344.4l3.3 1.8l-3.3 1.2zM1245 336.3l4.3 1.9l-4.3 1.1zM1239 466.6l7.7 2.3l-7.7 0.7zM1250 356.7l4.0 1.9l-4.0 1.1zM1215 510.3l4.1 1.9l-4.1 1.1zM1240 333.5l5.6 2.1l-5.6 0.9zM1209 539.8l4.4 1.9l-4.4 1.1zM1208 544.7l3.7 1.9l-3.7 1.1zM1195 600.3l5.5 2.1l-5.5 0.9zM1223 490.5l6.1 2.1l-6.1 0.9zM1266 396.5l6.4 2.1l-6.4 0.9zM1251 344.6l3.3 1.8l-3.3 1.2zM1261 419.6l6.9 2.2l-6.9 0.8zM1250 339.8l4.6 2.0l-4.6 1.0zM1265 391.6l3.5 1.9l-3.5 1.1zM1190 612.4l5.8 2.1l-5.8 0.9zM1250 339.5l5.2 2.0l-5.2 1.0zM1196 596.6l7.2 2.2l-7.2 0.8zM1258 430.9l3.9 1.9l-3.9 1.1zM1206 560.2l5.0 2.0l-5.0 1.0zM1266 399.9l7.2 2.2l-7.2 0.8zM1266 402.9l4.9 2.0l-4.9 1.0zM1259 368.5l6.9 2.2l-6.9 0.8zM1201 580.7l3.1 1.8l-3.1 1.2zM1196 597.8l7.6 2.3l-7.6 0.7zM1231 479.0l4.7 2.0l-4.7 1.0zM1221 492.5l3.2 1.8l-3.2 1.2zM1188 616.3l4.5 1.9l-4.5 1.1zM1228 323.8l6.3 2.1l-6.3 0.9zM1192 608.1l3.8 1.9l-3.8 1.1zM1194 601.1l4.4 1.9l-4.4 1.1zM1236 471.0l6.5 2.2l-6.5 0.8zM1206 561.6l4.6 2.0l-4.6 1.0zM1201 580.4l3.5 1.8l-3.5 1.2zM1197 593.1l6.1 2.1l-6.1 0.9zM1257 434.5l6.0 2.1l-6.0 0.9zM1250 449.3l3.3 1.8l-3.3 1.2zM1206 558.8l7.3 2.2l-7.3 0.8zM1246 456.0l7.6 2.3l-7.6 0.7zM1266 397.3l4.0 1.9l-4.0 1.1zM1233 475.7l7.3 2.2l-7.3 0.8zM1195 600.5l3.2 1.8l-3.2 1.2zM1255 440.4l3.8 1.9l-3.8 1.1zM1188 616.0l3.8 1.9l-3.8 1.1zM1222 316.7l5.0 2.0l-5.0 1.0zM1204 569.9l3.4 1.8l-3.4 1.2zM1241 464.2l3.6 1.9l-3.6 1.1zM1212 518.9l7.9 2.3l-7.9 0.7zM1199 588.6l5.8 2.1l-5.8 0.9zM1208 545.9l6.7 2.2l-6.7 0.8zM1210 530.8l4.8 2.0l-4.8 1.0zM1208 543.5l5.3 2.0l-5.3 1.0zM1248 338.6l3.7 1.9l-3.7 1.1z" fill="#111108"/>
<path d="M1047 748.6l-8.4 -0.4l8.4 3.4zM959 709.2l-9.7 -0.7l9.7 3.7zM818 608.5l-8.5 -0.4l8.5 3.4zM896 671.5l-6.7 0.0l6.7 3.0zM936 695.5l-7.2 -0.1l7.2 3.1zM854 642.2l-4.5 0.5l4.5 2.5zM765 542.8l-8.3 -0.4l8.3 3.4zM1045 747.8l-7.6 -0.2l7.6 3.2zM899 673.2l-6.0 0.2l6.0 2.8zM761 527.9l-6.7 0.0l6.7 3.0zM963 711.1l-4.7 0.5l4.7 2.5zM893 669.7l-5.0 0.4l5.0 2.6zM975 717.3l-7.3 -0.1l7.3 3.1zM848 637.5l-9.1 -0.5l9.1 3.5zM925 688.9l-6.5 0.1l6.5 2.9zM1013 736.0l-8.5 -0.4l8.5 3.4zM992 725.7l-6.4 0.1l6.4 2.9zM1010 734.7l-7.8 -0.2l7.8 3.2zM892 669.3l-10.1 -0.7l10.1 3.7zM1059 753.0l-10.3 -0.8l10.3 3.8zM925 688.9l-9.2 -0.5l9.2 3.5zM957 708.0l-6.5 0.1l6.5 2.9zM881 662.6l-6.6 0.0l6.6 3.0zM1022 739.2l-6.5 0.1l6.5 2.9zM827 619.2l-9.3 -0.6l9.3 3.6zM781 563.5l-5.5 0.3l5.5 2.7zM835 626.6l-10.8 -0.9l10.8 3.9zM892 669.0l-5.0 0.4l5.0 2.6zM827 619.1l-8.8 -0.5l8.8 3.5zM986 722.8l-7.8 -0.2l7.8 3.2zM953 705.5l-7.1 -0.1l7.1 3.1zM848 637.8l-9.0 -0.5l9.0 3.5zM921 686.8l-9.1 -0.5l9.1 3.5zM815 605.0l-4.9 0.4l4.9 2.6zM886 665.7l-5.8 0.2l5.8 2.8zM759 517.8l-4.1 0.6l4.1 2.4zM857 644.4l-6.0 0.2l6.0 2.8zM830 622.3l-4.3 0.5l4.3 2.5zM1032 743.1l-9.3 -0.6l9.3 3.6zM810 599.0l-4.6 0.5l4.6 2.5zM1052 750.4l-10.2 -0.8l10.2 3.8zM955 706.6l-6.2 0.1l6.2 2.9zM913 682.1l-4.5 0.5l4.5 2.5zM1033 743.4l-10.7 -0.9l10.7 3.9zM1015 736.5l-6.7 0.0l6.7 3.0zM858 645.2l-7.8 -0.2l7.8 3.2zM871 656.3l-9.8 -0.7l9.8 3.7zM975 717.3l-10.1 -0.8l10.1 3.8zM946 701.5l-4.7 0.4l4.7 2.6zM919 685.5l-4.0 0.6l4.0 2.4zM964 712.1l-4.7 0.5l4.7 2.5zM1018 737.8l-8.9 -0.5l8.9 3.5zM977 718.4l-8.5 -0.4l8.5 3.4zM1009 734.3l-4.2 0.6l4.2 2.4zM965 712.6l-8.2 -0.3l8.2 3.3zM941 698.4l-5.5 0.3l5.5 2.7zM829 621.6l-5.5 0.3l5.5 2.7zM1029 742.0l-4.5 0.5l4.5 2.5zM791 576.2l-6.6 0.0l6.6 3.0zM1009 734.2l-10.8 -0.9l10.8 3.9z" fill="#1a1a0c"/>
<path d="M763 536.1l-3.7 0.7l3.7 2.3zM814 604.1l-8.1 -0.3l8.1 3.3zM787 570.7l-7.1 -0.1l7.1 3.1zM803 590.3l-7.3 -0.1l7.3 3.1zM820 610.8l-6.2 0.1l6.2 2.9zM827 618.4l-7.8 -0.2l7.8 3.2zM792 578.0l-5.5 0.3l5.5 2.7zM761 526.9l-4.4 0.5l4.4 2.5zM775 555.6l-6.2 0.1l6.2 2.9zM823 613.4l-4.0 0.6l4.0 2.4zM793 579.3l-4.7 0.5l4.7 2.5zM775 556.4l-6.2 0.1l6.2 2.9zM777 559.2l-7.8 -0.2l7.8 3.2zM829 621.0l-6.5 0.1l6.5 2.9zM772 551.8l-5.0 0.4l5.0 2.6zM796 582.6l-4.2 0.6l4.2 2.4zM758 513.8l-7.2 -0.1l7.2 3.1zM798 584.7l-8.8 -0.5l8.8 3.5zM783 566.3l-4.1 0.6l4.1 2.4zM817 606.6l-6.7 0.0l6.7 3.0zM828 619.4l-5.4 0.3l5.4 2.7zM771 551.0l-4.4 0.5l4.4 2.5zM760 521.1l-4.0 0.6l4.0 2.4zM816 605.6l-4.8 0.4l4.8 2.6zM765 541.3l-8.9 -0.5l8.9 3.5zM763 532.6l-6.7 0.0l6.7 3.0zM764 541.1l-8.5 -0.4l8.5 3.4zM812 601.0l-6.1 0.1l6.1 2.9zM763 535.6l-6.8 -0.0l6.8 3.0zM763 536.7l-7.1 -0.1l7.1 3.1z" fill="#3a6029"/>
<path d="M928 690.7l-7.4 -0.2l7.4 3.2zM1004 731.3l-5.0 0.4l5.0 2.6zM991 725.2l-4.6 0.5l4.6 2.5zM869 654.3l-8.5 -0.4l8.5 3.4zM842 632.5l-8.2 -0.3l8.2 3.3zM935 694.9l-3.8 0.7l3.8 2.3zM857 644.5l-7.4 -0.1l7.4 3.1zM864 650.6l-5.0 0.4l5.0 2.6zM881 662.8l-8.0 -0.3l8.0 3.3zM1052 750.4l-4.6 0.5l4.6 2.5zM1016 737.0l-4.7 0.5l4.7 2.5zM1000 729.6l-7.9 -0.3l7.9 3.3zM900 673.9l-4.0 0.6l4.0 2.4zM1062 754.0l-7.2 -0.1l7.2 3.1zM908 678.6l-6.1 0.1l6.1 2.9zM957 707.8l-7.5 -0.2l7.5 3.2zM882 663.4l-5.2 0.3l5.2 2.7zM919 685.5l-7.2 -0.1l7.2 3.1zM996 727.5l-7.1 -0.1l7.1 3.1zM944 700.1l-6.0 0.2l6.0 2.8zM1019 738.3l-7.6 -0.2l7.6 3.2zM936 695.7l-4.0 0.6l4.0 2.4zM940 698.0l-5.9 0.2l5.9 2.8zM948 702.5l-5.8 0.2l5.8 2.8zM937 696.4l-5.9 0.2l5.9 2.8zM984 722.0l-5.5 0.3l5.5 2.7zM868 654.0l-7.2 -0.1l7.2 3.1zM928 690.8l-6.0 0.2l6.0 2.8zM1028 741.3l-8.7 -0.4l8.7 3.4zM837 628.5l-5.8 0.2l5.8 2.8zM898 673.2l-9.0 -0.5l9.0 3.5zM1030 742.2l-6.3 0.1l6.3 2.9zM956 707.2l-5.3 0.3l5.3 2.7zM958 708.2l-6.0 0.2l6.0 2.8zM840 631.2l-4.4 0.5l4.4 2.5zM854 642.0l-8.4 -0.4l8.4 3.4zM946 701.5l-7.6 -0.2l7.6 3.2zM1025 740.3l-6.0 0.2l6.0 2.8zM929 691.2l-8.1 -0.3l8.1 3.3zM1004 731.5l-3.7 0.7l3.7 2.3z" fill="#64633c"/>
<path d="M1270 804.1l6.2 3.8l-6.2 -0.8zM1210 795.7l2.4 2.4l-2.4 0.6zM1313 792.5l6.0 3.8l-6.0 -0.8zM1259 802.5l2.8 2.6l-2.8 0.4zM1222 797.4l5.7 3.6l-5.7 -0.6zM1287 803.1l2.7 2.5l-2.7 0.5zM1263 803.1l5.3 3.5l-5.3 -0.5zM1223 797.5l3.5 2.8l-3.5 0.2zM1239 799.8l3.3 2.7l-3.3 0.3zM1250 801.3l5.4 3.5l-5.4 -0.5zM1312 793.6l2.8 2.6l-2.8 0.4zM1319 781.9l2.9 2.6l-2.9 0.4zM1310 795.2l3.2 2.7l-3.2 0.3zM1305 800.1l3.7 2.9l-3.7 0.1zM1215 796.3l3.8 2.9l-3.8 0.1zM1306 799.1l4.0 3.0l-4.0 -0.0zM1262 803.0l3.3 2.8l-3.3 0.2zM1299 802.0l5.9 3.7l-5.9 -0.7zM1273 804.5l3.1 2.7l-3.1 0.3zM1282 803.6l4.5 3.2l-4.5 -0.2zM1312 793.8l5.1 3.4l-5.1 -0.4zM1304 801.3l4.1 3.0l-4.1 -0.0zM1273 804.5l6.4 3.9l-6.4 -0.9zM1316 789.6l4.4 3.2l-4.4 -0.2zM1233 798.9l3.9 3.0l-3.9 0.0zM1238 799.6l2.8 2.5l-2.8 0.5zM1318 782.9l3.3 2.7l-3.3 0.3zM1241 800.0l4.0 3.0l-4.0 0.0zM1228 798.2l2.8 2.5l-2.8 0.5zM1303 801.6l5.0 3.4l-5.0 -0.4z" fill="#1a1a0c"/>
<path d="M1158 322.9l-3.7 0.1l3.7 2.4zM1115 380.2l-4.8 -0.2l4.8 2.7zM1095 430.9l-4.0 0.0l4.0 2.5zM1049 626.0l-2.5 0.5l2.5 2.0zM1031 575.6l-2.2 0.6l2.2 1.9zM1104 416.9l-2.1 0.6l2.1 1.9zM1087 443.5l-4.7 -0.2l4.7 2.7zM1043 507.1l-3.2 0.3l3.2 2.2zM1095 430.8l-2.8 0.4l2.8 2.1zM1100 423.2l-4.5 -0.1l4.5 2.6zM1082 448.7l-2.5 0.5l2.5 2.0zM1069 463.7l-5.9 -0.5l5.9 3.0zM1080 451.4l-4.5 -0.1l4.5 2.6zM1107 404.6l-4.7 -0.2l4.7 2.7zM1088 442.8l-2.0 0.6l2.0 1.9zM1134 341.8l-3.8 0.1l3.8 2.4zM1068 464.7l-4.5 -0.1l4.5 2.6zM1108 402.9l-5.7 -0.5l5.7 3.0zM1030 552.5l-3.9 0.1l3.9 2.4zM1030 569.0l-4.0 0.1l4.0 2.4zM1031 547.2l-2.2 0.6l2.2 1.9zM1060 478.1l-5.0 -0.2l5.0 2.7zM1107 405.2l-3.0 0.4l3.0 2.1zM1080 451.1l-6.0 -0.5l6.0 3.0zM1030 563.3l-3.7 0.1l3.7 2.4zM1115 380.1l-5.3 -0.3l5.3 2.8zM1034 536.3l-3.1 0.3l3.1 2.2zM1077 645.3l-3.9 0.1l3.9 2.4zM1126 355.9l-5.0 -0.3l5.0 2.8zM1035 533.0l-2.2 0.6l2.2 1.9zM1072 460.7l-5.7 -0.5l5.7 3.0zM1060 478.4l-2.4 0.5l2.4 2.0zM1144 328.2l-2.3 0.6l2.3 1.9zM1104 416.1l-5.1 -0.3l5.1 2.8zM1044 506.8l-5.6 -0.4l5.6 2.9zM1144 328.3l-3.9 0.1l3.9 2.4zM1162 318.1l-2.7 0.4l2.7 2.1zM1085 445.3l-3.9 0.1l3.9 2.4zM1036 599.7l-3.8 0.1l3.8 2.4zM1034 592.9l-3.7 0.1l3.7 2.4zM1129 349.3l-5.4 -0.4l5.4 2.9zM1123 360.9l-5.5 -0.4l5.5 2.9zM1159 322.0l-3.2 0.3l3.2 2.2zM1038 518.8l-4.0 0.0l4.0 2.5zM1161 319.8l-3.3 0.3l3.3 2.2zM1068 641.8l-5.4 -0.4l5.4 2.9zM1054 487.6l-2.7 0.4l2.7 2.1zM1140 330.1l-2.9 0.4l2.9 2.1zM1035 596.0l-5.2 -0.3l5.2 2.8zM1136 337.9l-2.4 0.5l2.4 2.0zM1034 593.7l-4.9 -0.2l4.9 2.7zM1097 428.4l-4.9 -0.2l4.9 2.7zM1117 375.9l-3.1 0.3l3.1 2.2zM1031 578.6l-3.8 0.1l3.8 2.4zM1122 364.4l-2.4 0.5l2.4 2.0zM1031 546.0l-4.8 -0.2l4.8 2.7zM1030 570.4l-2.3 0.6l2.3 1.9zM1117 375.7l-2.5 0.5l2.5 2.0zM1038 519.1l-2.6 0.5l2.6 2.0zM1111 393.2l-3.7 0.1l3.7 2.4zM1153 325.1l-3.5 0.2l3.5 2.3zM1056 635.4l-5.7 -0.5l5.7 3.0zM1114 384.2l-4.3 -0.0l4.3 2.5zM1074 457.7l-5.0 -0.3l5.0 2.8zM1030 566.5l-4.7 -0.2l4.7 2.7zM1137 335.5l-3.4 0.2l3.4 2.3zM1067 641.3l-2.2 0.6l2.2 1.9zM1031 579.7l-5.9 -0.5l5.9 3.0zM1030 553.1l-3.2 0.3l3.2 2.2zM1054 488.4l-4.1 0.0l4.1 2.5z" fill="#74724a"/>
<path d="M1216 205.2l-2.5 0.5l2.5 2.0zM1193 254.8l-4.8 -0.2l4.8 2.7zM1273 83.7l-3.3 0.3l3.3 2.2zM1177 289.1l-2.6 0.5l2.6 2.0zM1250 128.0l-3.9 0.1l3.9 2.4zM1269 90.9l-4.8 -0.2l4.8 2.7zM1238 158.3l-3.1 0.3l3.1 2.2zM1166 314.7l-3.0 0.4l3.0 2.1zM1209 218.8l-3.1 0.3l3.1 2.2zM1271 85.8l-3.3 0.3l3.3 2.2zM1213 211.8l-3.6 0.2l3.6 2.3zM1171 304.5l-4.4 -0.1l4.4 2.6zM1236 165.2l-2.7 0.4l2.7 2.1zM1177 290.8l-3.6 0.2l3.6 2.3zM1285 71.0l-4.8 -0.2l4.8 2.7zM1252 125.4l-3.0 0.3l3.0 2.2zM1173 299.0l-5.0 -0.2l5.0 2.7zM1244 144.6l-4.9 -0.2l4.9 2.7zM1163 319.4l-3.8 0.1l3.8 2.4zM1277 77.6l-2.5 0.5l2.5 2.0zM1239 157.3l-3.6 0.2l3.6 2.3zM1198 242.9l-2.4 0.5l2.4 2.0zM1167 312.2l-4.9 -0.2l4.9 2.7zM1310 29.5l-3.6 0.2l3.6 2.3zM1327 8.7l-4.2 -0.0l4.2 2.5zM1304 37.1l-3.1 0.3l3.1 2.2zM1265 99.3l-4.2 0.0l4.2 2.5zM1257 115.1l-4.2 -0.0l4.2 2.5zM1229 182.0l-4.6 -0.1l4.6 2.6zM1294 56.9l-2.9 0.4l2.9 2.1zM1247 137.3l-4.1 0.0l4.1 2.5zM1245 141.4l-3.4 0.2l3.4 2.3zM1168 310.2l-2.6 0.5l2.6 2.0zM1330 4.7l-3.7 0.2l3.7 2.3zM1230 178.8l-3.6 0.2l3.6 2.3zM1203 233.2l-3.3 0.2l3.3 2.3zM1249 131.0l-2.9 0.4l2.9 2.1zM1295 55.4l-3.3 0.3l3.3 2.2zM1235 165.9l-3.1 0.3l3.1 2.2zM1290 65.0l-3.9 0.1l3.9 2.4zM1237 161.5l-2.1 0.6l2.1 1.9zM1260 109.0l-3.1 0.3l3.1 2.2zM1234 168.5l-4.8 -0.2l4.8 2.7zM1287 69.1l-3.4 0.2l3.4 2.3zM1169 307.9l-4.5 -0.1l4.5 2.6zM1215 208.1l-3.6 0.2l3.6 2.3zM1203 231.2l-4.0 0.0l4.0 2.5zM1180 284.4l-4.3 -0.0l4.3 2.5zM1286 69.8l-4.0 0.1l4.0 2.4zM1181 281.4l-2.8 0.4l2.8 2.1z" fill="#7b7849"/>
<path d="M812 468.4l-1.3 -3.0l1.3 5.5zM763 485.8l-0.8 -1.5l0.8 4.0zM819 467.0l-0.9 -1.7l0.9 4.2zM842 467.7l-0.8 -1.3l0.8 3.8zM810 468.9l-1.0 -2.0l1.0 4.5zM777 479.4l-1.4 -3.3l1.4 5.8zM794 473.3l-0.7 -1.0l0.7 3.5zM789 475.2l-1.3 -3.0l1.3 5.5zM828 467.3l-0.8 -1.3l0.8 3.8zM802 470.8l-0.8 -1.4l0.8 3.9zM789 475.0l-1.3 -3.1l1.3 5.6zM784 477.1l-0.6 -0.8l0.6 3.3zM814 467.8l-0.7 -1.2l0.7 3.7zM809 469.1l-1.0 -2.2l1.0 4.7zM783 477.4l-0.8 -1.4l0.8 3.9zM846 467.9l-0.7 -1.1l0.7 3.6zM847 467.9l-1.1 -2.4l1.1 4.9zM825 467.2l-1.2 -2.9l1.2 5.4zM838 467.6l-0.9 -1.7l0.9 4.2zM771 482.3l-0.8 -1.4l0.8 3.9zM811 468.6l-1.0 -2.2l1.0 4.7zM812 468.4l-0.8 -1.3l0.8 3.8zM803 470.5l-0.9 -1.6l0.9 4.1zM764 485.6l-1.2 -2.8l1.2 5.3zM802 470.7l-0.8 -1.4l0.8 3.9zM859 468.3l-1.0 -2.0l1.0 4.5zM799 471.6l-1.0 -2.2l1.0 4.7zM774 480.8l-0.7 -1.1l0.7 3.6zM792 474.2l-1.3 -3.0l1.3 5.5zM856 468.2l-1.0 -2.0l1.0 4.5z" fill="#3a6029"/>
<path d="M932 481.9l-0.9 -1.6l0.9 4.1zM873 470.2l-1.6 -4.0l1.6 6.5zM983 496.8l-0.9 -1.8l0.9 4.3zM935 482.7l-1.7 -4.5l1.7 7.0zM895 473.4l-0.9 -1.7l0.9 4.2zM932 481.9l-1.5 -3.7l1.5 6.2zM955 488.2l-0.9 -1.7l0.9 4.2zM865 469.1l-1.2 -2.9l1.2 5.4zM941 484.3l-0.7 -1.0l0.7 3.5zM974 493.8l-0.8 -1.4l0.8 3.9zM977 494.9l-0.8 -1.4l0.8 3.9zM957 488.9l-1.7 -4.4l1.7 6.9zM871 469.9l-1.3 -3.1l1.3 5.6zM918 478.0l-1.1 -2.6l1.1 5.1zM865 469.1l-0.7 -0.9l0.7 3.4zM1011 505.8l-1.1 -2.4l1.1 4.9zM882 471.5l-1.1 -2.4l1.1 4.9zM975 494.2l-0.6 -0.9l0.6 3.4zM1008 504.8l-1.0 -2.1l1.0 4.6zM905 474.8l-1.6 -4.1l1.6 6.6zM944 485.1l-0.8 -1.3l0.8 3.8zM894 473.3l-1.5 -3.6l1.5 6.1zM958 489.1l-1.1 -2.5l1.1 5.0zM992 499.6l-1.0 -2.1l1.0 4.6zM891 472.8l-1.4 -3.3l1.4 5.8zM899 474.1l-0.9 -1.9l0.9 4.4zM871 469.9l-1.4 -3.3l1.4 5.8zM980 496.0l-1.6 -4.2l1.6 6.7zM892 473.1l-1.5 -3.8l1.5 6.3zM908 475.4l-1.2 -2.8l1.2 5.3zM952 487.5l-1.5 -3.7l1.5 6.2zM879 471.1l-1.1 -2.4l1.1 4.9zM1002 502.8l-0.9 -1.8l0.9 4.3zM870 469.8l-1.2 -2.6l1.2 5.1zM920 478.7l-1.5 -3.9l1.5 6.4z" fill="#64633c"/>
</svg><!--S1-->
<!--O0--><svg id="ov" style="position:absolute;left:0;top:0" width="1101" height="807" viewBox="470 0 1101 807" font-family="Liberation Sans, sans-serif">
<defs><filter id="bl" x="-50%" y="-100%" width="200%" height="300%"><feGaussianBlur stdDeviation="3.5"/></filter></defs>
<g fill="none" stroke="#dadada" stroke-width="2.2" stroke-linecap="butt">
<path d="M489 784V778.5H494.5M489.5 779.5Q499 775.5 502 782Q503 787 494.5 789.5"/>
<path d="M531.5 784V778.5H526M531 779.5Q521.5 775.5 518.5 782Q517.5 787 526 789.5"/>
</g>
<g fill="none" stroke="#e4e4e4" stroke-width="1.6">
<path d="M1406 27V24H1409M1417 24H1420V27M1420 35V38H1417M1409 38H1406V35"/>
</g>
<rect x="1410" y="28" width="6" height="6" fill="#e0e0e0"/>
<g fill="#e6e6e6" stroke="none">
<path d="M1497 23L1504.500 18.500L1504 22Q1512 22.500 1517 27.500L1514.500 30.500Q1510 26.500 1503.500 26L1503.500 29.500Z"/>
<path d="M1529.500 54.500L1522.500 49L1526 48.200Q1525.500 41 1521.500 36L1525 33.800Q1530 40 1530.200 47.500L1533.500 47Z"/>
</g>
<ellipse cx="1466" cy="129" rx="36" ry="7" transform="rotate(17 1466 129)" fill="#1a1a1a" opacity="0.85" filter="url(#bl)"/>
<polygon points="1460,63.500 1497,73 1509,84.500 1457,72.500" fill="#f6f6f6"/>
<polygon points="1457,72.500 1509,84.500 1491.500,127.500 1441.500,117" fill="#f1f1f1"/>
<polygon points="1459,79.500 1502,88.500 1488,121 1448.500,112.500" fill="#fafafa"/>
<path d="M1460 63.500L1441.300 117.500" stroke="#1414d8" stroke-width="3" fill="none"/>
<path d="M1441 117.500L1497.500 135.500" stroke="#e81212" stroke-width="3" fill="none"/>
<path d="M1440 104L1441 117" stroke="#1fb81f" stroke-width="2.5" fill="none"/>
<text x="1461" y="54.500" font-size="17" font-weight="bold" fill="#1616d6">Z</text>
<text x="1434" y="105" font-size="17" font-weight="bold" fill="#20b820">Y</text>
<text x="1503.500" y="145" font-size="17" font-weight="bold" fill="#e41414">X</text>
<text x="1478" y="104.500" font-size="9" font-weight="bold" fill="#555" text-anchor="middle" transform="rotate(15 1478 101.500)" letter-spacing="0.2">FRONT</text>
<g fill="none" stroke="#e4e4e4" stroke-width="1.3" stroke-linejoin="round">
<path d="M1532 152L1538.500 148.500L1545 152V159.500L1538.500 163L1532 159.500ZM1532 152L1538.500 155.500L1545 152M1538.500 155.500V163"/>
</g>
<circle cx="1547.500" cy="165.500" r="1.300" fill="#e4e4e4"/>
</svg><!--O1-->
</div>
<div id="rgt"></div>
<div id="bar1"></div><div id="bar2">
<svg style="position:absolute;left:546px;top:3px" width="9" height="9" viewBox="0 0 9 9"><path d="M1 1L4.5 4L8 1M1 5L4.5 8L8 5" stroke="#777" stroke-width="1" fill="none"/></svg>
</div>
<div id="log">
<div class="t g" style="left:19px;top:3px;line-height:14px;letter-spacing:-.5px">12:41:14</div>
<div class="t" style="left:78px;top:3px;line-height:14px;letter-spacing:.33px">Artec Studio 15 Professional x64 15.1.2.60 (gbfb752ab3) started</div>
</div>
</div></body></html>
